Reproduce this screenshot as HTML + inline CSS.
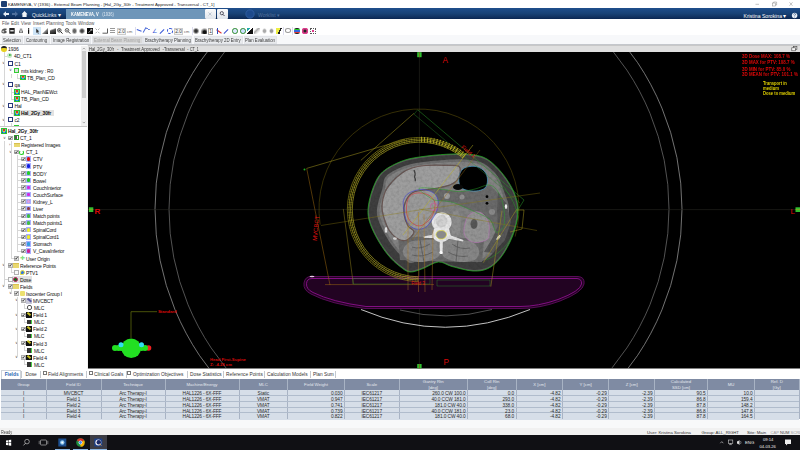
<!DOCTYPE html><html><head><meta charset="utf-8"><style>
*{margin:0;padding:0;box-sizing:border-box}
html,body{width:800px;height:450px;overflow:hidden;background:#fff;font-family:"Liberation Sans", sans-serif;}
.a{position:absolute;white-space:nowrap}
.t{position:absolute;white-space:nowrap;font-size:4.6px;line-height:6px;color:#222}
</style></head><body>

<div class="a" style="left:0;top:0;width:800px;height:8px;background:#fff"></div>
<div class="a" style="left:1px;top:1px;width:6px;height:6px;background:#1d3f73;border-radius:1px"></div>
<div class="t" style="left:8px;top:2px;font-size:4.28px;color:#222">KAMENEVA, V (1936) - External Beam Planning - [Hal_2Gy_30fr - Treatment Approved - Transversal - CT_1]</div>
<svg class="a" style="left:740px;top:0" width="60" height="9" viewBox="740 0 60 9"><path d="M755.5,4.3 L759,4.3" stroke="#888" stroke-width="0.5"/><rect x="772.6" y="3" width="3" height="3" fill="none" stroke="#888" stroke-width="0.5"/><path d="M773.6,3 L773.6,2 L776.6,2 L776.6,5 L775.6,5" fill="none" stroke="#888" stroke-width="0.5"/><path d="M789.5,2.3 L792.5,5.8 M792.5,2.3 L789.5,5.8" stroke="#888" stroke-width="0.5"/></svg>
<div class="a" style="left:0;top:8.3px;width:800px;height:10.9px;background:linear-gradient(#1f4e8c,#184276 50%,#10305e 85%,#0a2550)"></div>
<div class="a" style="left:66px;top:8.5px;width:139px;height:10.5px;background:#6e96b9"></div>
<div class="a" style="left:205px;top:9.3px;width:11px;height:9.5px;background:linear-gradient(#fbfbfb,#dfe5ec);border-radius:1px"></div>
<div class="a" style="left:217px;top:9.3px;width:11px;height:9.5px;background:linear-gradient(#fbfbfb,#dfe5ec);border-radius:1px"></div>
<svg class="a" style="left:0;top:0" width="300" height="20" viewBox="0 0 300 20"><path d="M3,14 L6,11.3 L6,13 L9,13 L9,15 L6,15 L6,16.7Z" fill="#e6edf5"/><path d="M18,14 L15,11.3 L15,13 L12,13 L12,15 L15,15 L15,16.7Z" fill="#4f6f9c"/><path d="M21.5,14.2 L24.5,11 L27.5,14.2 L26.6,14.2 L26.6,17 L22.4,17 L22.4,14.2Z" fill="#f0f4f8"/><path d="M208.5,12.5 L211.5,15.5 M211.5,12.5 L208.5,15.5" stroke="#9ab" stroke-width="0.6"/><circle cx="221.8" cy="13.2" r="1.6" stroke="#334" stroke-width="0.8" fill="none"/><path d="M223,14.4 L224.5,16" stroke="#334" stroke-width="0.9"/><circle cx="250" cy="14" r="4.2" fill="#1d4a8c" stroke="#3a6ab0" stroke-width="0.6"/></svg>
<div class="t" style="left:32px;top:12.4px;font-size:5px;color:#e6edf5">QuickLinks <span style="font-size:6px">&#x25BE;</span></div>
<div class="t" style="left:71px;top:12.3px;font-size:4.6px;color:#fff;font-weight:bold;transform:scaleX(0.88);transform-origin:0 0">KAMENEVA, V&nbsp;&nbsp; <span style="font-weight:normal;color:#dce6f0">(1936)</span></div>
<div class="t" style="left:258px;top:11.5px;font-size:5px;color:#52729f">Worklist &#x25BE;</div>
<div class="t" style="left:743.5px;top:12.6px;font-size:5.1px;color:#fff">Kristina Sorokina <span style="font-size:6px">&#x25BE;</span></div>
<svg class="a" style="left:790px;top:11px" width="10" height="9" viewBox="790 11 10 9"><circle cx="794.6" cy="15.5" r="2.7" fill="#e8eef5"/><path d="M793.6,14.6 Q793.8,13.4 794.8,13.5 Q795.8,13.7 795.5,14.6 Q795.2,15.2 794.7,15.5 L794.7,16.2" fill="none" stroke="#1a3f73" stroke-width="0.55"/><circle cx="794.7" cy="17.1" r="0.35" fill="#1a3f73"/></svg>
<div class="t" style="left:2px;top:21.4px;font-size:4.6px;color:#555">File</div>
<div class="t" style="left:11px;top:21.4px;font-size:4.6px;color:#555">Edit</div>
<div class="t" style="left:21px;top:21.4px;font-size:4.6px;color:#555">View</div>
<div class="t" style="left:33px;top:21.4px;font-size:4.6px;color:#555">Insert</div>
<div class="t" style="left:46px;top:21.4px;font-size:4.6px;color:#555">Planning</div>
<div class="t" style="left:65.5px;top:21.4px;font-size:4.6px;color:#555">Tools</div>
<div class="t" style="left:78px;top:21.4px;font-size:4.6px;color:#555">Window</div>
<div class="a" style="left:0;top:27px;width:800px;height:8px;background:#fff"></div>
<div class="a" style="left:33px;top:27.3px;width:8px;height:7.5px;background:#cde4f7"></div>
<svg class="a" style="left:0;top:26px" width="120" height="10" viewBox="0 26 120 10"><path d="M1.5,31 Q1.5,29 4,28.5 L6.5,28.5 L6.5,30 L4.5,30.5 L6.5,31 L6.5,33 Q3,34 1.5,32.5Z" fill="#555"/><circle cx="3.2" cy="31.5" r="1" fill="#ccc"/><rect x="9.3" y="28" width="5.4" height="5.8" rx="0.6" fill="#222"/><rect x="10.3" y="30" width="3.4" height="1.5" fill="#ddd"/><path d="M19,30.5 L23,30.5 L23,33 L19,33Z" fill="#777"/><rect x="19.8" y="28.5" width="2.4" height="2" fill="#999"/><circle cx="21" cy="31.8" r="0.8" fill="#eee"/><rect x="28" y="29.3" width="1.2" height="4.5" fill="#111"/><rect x="28" y="28" width="1.2" height="0.8" fill="#111"/><path d="M36.2,28.5 L36.2,33 L37.2,32 L38,33.8 L38.8,33.4 L38,31.7 L39.3,31.6Z" fill="#333"/><circle cx="59.3" cy="30.3" r="1.8" fill="none" stroke="#333" stroke-width="0.8"/><path d="M60.6,31.6 L62.5,33.6" stroke="#222" stroke-width="1"/><path d="M58.3,30.3 L60.3,30.3 M59.3,29.3 L59.3,31.3" stroke="#111" stroke-width="0.6"/><circle cx="67" cy="30.3" r="1.8" fill="none" stroke="#444" stroke-width="0.8"/><path d="M68.3,31.6 L70.2,33.6" stroke="#333" stroke-width="1"/><path d="M66,30.3 L68,30.3" stroke="#222" stroke-width="0.6"/><rect x="87" y="28" width="6" height="6" fill="#0a0a0a"/><path d="M88.5,32.8 L91.8,29.3 M90.2,29.3 L91.8,29.3 L91.8,30.9" stroke="#fff" stroke-width="0.6" fill="none"/><path d="M95.5,28.5 L97,30 M99.5,28.5 L98,30 M95.5,33.3 L97,31.8 M99.5,33.3 L98,31.8" stroke="#777" stroke-width="0.6"/><path d="M102.5,33.2 L107.5,33.2 L107.5,28.5" stroke="#333" stroke-width="0.8" fill="none"/></svg>
<div class="a" style="left:42px;top:28.3px;width:6px;height:5.5px;background:linear-gradient(135deg,#fff 45%,#888 55%,#111 100%)"></div>
<div class="a" style="left:50px;top:28.3px;width:5.5px;height:5.5px;background:linear-gradient(160deg,#fff 20%,#555 40%,#111 100%)"></div>
<div class="a" style="left:71.5px;top:28.3px;width:5.5px;height:5.5px;background:radial-gradient(#666 0 35%,#bbb 60%,#fff 85%)"></div>
<div class="a" style="left:79px;top:28.3px;width:5.5px;height:5.5px;background:radial-gradient(#444 0 30%,#999 50%,#fff 80%);border-radius:50%"></div>
<div class="a" style="left:110px;top:28.3px;width:5px;height:5.5px;background:repeating-linear-gradient(#999 0 1px,#fff 1px 2px)"></div>
<div class="a" style="left:117px;top:27.6px;width:9px;height:7px;border:0.6px solid #ccc;background:#f6f6f6"></div>
<div class="t" style="left:117px;top:29.2px;width:9px;text-align:center;font-size:4.8px;color:#444">2.0</div>
<div class="t" style="left:127px;top:29.4px;font-size:4px;color:#666">cm</div>
<div class="a" style="left:134.5px;top:27px;width:0.6px;height:8px;background:#dde"></div>
<div class="a" style="left:137px;top:28px;width:5px;height:3px;border-bottom:1.5px solid #3a5ad8;transform:rotate(20deg)"></div>
<div class="a" style="left:144px;top:28.3px;width:5px;height:5.5px;border-left:1px dashed #4a6ad8;border-top:1px solid #4a6ad8;transform:rotate(30deg)"></div>
<div class="t" style="left:152px;top:27.6px;font-size:5.5px;color:#3a5ad8">&#x2220;</div>
<div class="a" style="left:159px;top:31px;width:6px;height:1px;border-top:1px solid #3a5ad8;transform:rotate(-45deg)"></div>
<div class="a" style="left:167px;top:28.3px;width:5.5px;height:5.5px;border:1px dashed #3a5ad8;border-radius:50%"></div>
<div class="a" style="left:174px;top:27.6px;width:9px;height:7px;border:0.6px solid #ccc;background:#f3f3f3"></div>
<div class="t" style="left:174px;top:29.2px;width:9px;text-align:center;font-size:4.8px;color:#444">2.0</div>
<div class="t" style="left:184px;top:29.4px;font-size:4px;color:#666">cm</div>
<div class="a" style="left:191.5px;top:27px;width:0.6px;height:8px;background:#dde"></div>
<div class="a" style="left:193px;top:28.3px;width:5.5px;height:5.5px;background:radial-gradient(#333 0 30%,#888 50%,#fff 80%)"></div>
<div class="a" style="left:201px;top:28.3px;width:5.5px;height:5.5px;background:radial-gradient(circle at 60% 70%,#111 0 25%,#777 45%,#fff 80%)"></div>
<div class="a" style="left:208px;top:27.6px;width:5px;height:7px;border:0.6px solid #aaa;background:#fff"></div>
<div class="t" style="left:209.3px;top:29px;font-size:4.8px;color:#333">1</div>
<div class="a" style="left:216px;top:31px;width:6px;height:1px;border-top:1px solid #e03030;transform:rotate(35deg)"></div>
<div class="a" style="left:217px;top:28.3px;width:2px;height:5.5px;border-left:1px solid #3050c0"></div>
<div class="a" style="left:223px;top:31px;width:6px;height:1px;border-top:1px solid #4050d0;transform:rotate(-45deg)"></div>
<div class="a" style="left:232px;top:28.3px;width:5.5px;height:5.5px;border:1.2px solid #2a8a2a;border-radius:50%;background:#dde8ff"></div>
<div class="a" style="left:240px;top:28.3px;width:5.5px;height:5.5px;border:1.2px solid #2a8a2a;border-radius:50%;background:#cce0ff"></div>
<div class="a" style="left:247px;top:28.3px;width:5.5px;height:5.5px;background:linear-gradient(135deg,#2aa 0 30%,#fff 30% 45%,#111 45% 100%)"></div>
<div class="a" style="left:254px;top:28.3px;width:5.5px;height:5.5px;background:linear-gradient(135deg,#fff 20%,#aaa 40%,#ddd 60%,#fff 80%)"></div>
<div class="a" style="left:262px;top:28.3px;width:5px;height:5.5px;background:radial-gradient(#aaa 0 30%,#fff 70%)"></div>
<div class="a" style="left:269px;top:28.3px;width:5px;height:5.5px;background:radial-gradient(#999 0 30%,#fff 70%)"></div>
<div class="a" style="left:276px;top:28.3px;width:6px;height:5.5px;background:linear-gradient(110deg,#ee4 0 50%,#222 50% 70%,#fff 70%)"></div>
<div class="a" style="left:283px;top:27px;width:0.6px;height:8px;background:#dde"></div>
<div class="a" style="left:285px;top:28.3px;width:6px;height:4.5px;border:1px solid #999;border-radius:50%"></div>
<div class="a" style="left:292px;top:27px;width:0.6px;height:8px;background:#dde"></div>
<div class="a" style="left:294px;top:28.3px;width:6px;height:5.5px;background:linear-gradient(#222 0 15%,#2c2 15% 40%,#36d 40% 65%,#d33 65% 85%,#222 85%);border-radius:40%"></div>
<div class="a" style="left:302px;top:28.3px;width:6px;height:5.5px;background:radial-gradient(#222 0 30%,#c2387a 40%,#e04090 70%,#fff 90%)"></div>
<div class="a" style="left:309.5px;top:28.3px;width:6px;height:5.5px;background:radial-gradient(#e03a8a 0 35%,#fff 45%);border:1px dotted #555"></div>
<div class="a" style="left:0;top:35px;width:800px;height:10px;background:#f6f7f9"></div>
<div class="a" style="left:0;top:35px;width:800px;height:9.5px;background:#f7f8fa"></div>
<div class="a" style="left:1.9px;top:35.9px;width:21.6px;height:8.4px;background:#e9ebee;border:0.5px solid #e2e4e8"></div>
<div class="t" style="left:3.2px;top:38.3px;font-size:4.7px;color:#3a3a3a;transform:scaleX(0.92);transform-origin:0 0">Selection</div>
<div class="a" style="left:24px;top:35.9px;width:25.7px;height:8.4px;background:#e9ebee;border:0.5px solid #e2e4e8"></div>
<div class="t" style="left:25.9px;top:38.3px;font-size:4.7px;color:#3a3a3a;transform:scaleX(0.92);transform-origin:0 0">Contouring</div>
<div class="a" style="left:50.7px;top:35.9px;width:40.3px;height:8.4px;background:#e9ebee;border:0.5px solid #e2e4e8"></div>
<div class="t" style="left:53px;top:38.3px;font-size:4.7px;color:#3a3a3a;transform:scaleX(0.92);transform-origin:0 0">Image Registration</div>
<div class="a" style="left:92px;top:35.9px;width:51.0px;height:8.4px;background:#d9d9d9;border:0.5px solid #e2e4e8"></div>
<div class="t" style="left:93.8px;top:38.3px;font-size:4.7px;color:#a0a0a0;transform:scaleX(0.92);transform-origin:0 0">External Beam Planning</div>
<div class="a" style="left:142.8px;top:35.9px;width:49.7px;height:8.4px;background:#e9ebee;border:0.5px solid #e2e4e8"></div>
<div class="t" style="left:144.7px;top:38.3px;font-size:4.7px;color:#3a3a3a;transform:scaleX(0.92);transform-origin:0 0">Brachytherapy Planning</div>
<div class="a" style="left:193.5px;top:35.9px;width:49.3px;height:8.4px;background:#e9ebee;border:0.5px solid #e2e4e8"></div>
<div class="t" style="left:195px;top:38.3px;font-size:4.7px;color:#3a3a3a;transform:scaleX(0.92);transform-origin:0 0">Brachytherapy 2D Entry</div>
<div class="a" style="left:243.6px;top:35.9px;width:33.0px;height:8.4px;background:#e9ebee;border:0.5px solid #e2e4e8"></div>
<div class="t" style="left:245px;top:38.3px;font-size:4.7px;color:#3a3a3a;transform:scaleX(0.92);transform-origin:0 0">Plan Evaluation</div>
<div class="a" style="left:0;top:44.3px;width:800px;height:0.8px;background:#c4c7cc"></div>
<div class="a" style="left:0;top:45px;width:88px;height:324px;background:#fff"></div>
<div class="a" style="left:81px;top:45.5px;width:5.7px;height:80px;background:#f0f0f0"></div>
<div class="a" style="left:81.8px;top:51px;width:4.2px;height:47px;background:#cdcdcd"></div>
<svg class="a" style="left:80px;top:45px" width="8" height="82" viewBox="80 45 8 82"><path d="M82.6,49.3 L83.9,48 L85.2,49.3" stroke="#666" stroke-width="0.5" fill="none"/><path d="M82.6,121.8 L83.9,123.1 L85.2,121.8" stroke="#666" stroke-width="0.5" fill="none"/></svg>
<div class="a" style="left:0;top:125.5px;width:87px;height:0.8px;background:#c8c8c8"></div>
<div class="a" style="left:86.7px;top:45px;width:1.5px;height:324px;background:#f4f4f4"></div>
<div class="a" style="left:0;top:45px;width:82px;height:81px;overflow:hidden">
<div class="a" style="left:1px;top:1.1px;width:5.5px;height:5.5px;background:#e8d020;border-radius:50%;border-top:2px solid #222"></div><div class="t" style="left:8px;top:1.30px;font-size:5px;letter-spacing:-0.15px;font-weight:normal;color:#111">1936</div>
<div class="a" style="left:7px;top:8.4px;width:5px;height:5px;background:#c8e8c8;border-radius:50%"></div><div class="a" style="left:8.5px;top:9.2px;width:0;height:0;border-left:3px solid #2a2;border-top:1.7px solid transparent;border-bottom:1.7px solid transparent"></div><div class="t" style="left:14px;top:8.41px;font-size:5px;letter-spacing:-0.15px;font-weight:normal;color:#111">4D_CT1</div>
<div class="t" style="left:1.5px;top:14.8px;font-size:4px;color:#555">&#x2228;</div><div class="a" style="left:8px;top:15.5px;width:5px;height:5px;background:#fff;border:0.8px solid #2a3a7a;border-top:1.5px solid #2a3a7a"></div><div class="t" style="left:14.5px;top:15.52px;font-size:5px;letter-spacing:-0.15px;font-weight:normal;color:#111">C1</div>
<div class="t" style="left:8.5px;top:21.9px;font-size:4px;color:#555">&#x2228;</div><div class="a" style="left:14px;top:22.6px;width:5px;height:5px;background:#ddd;border:1px solid #3c3"></div><div class="t" style="left:21px;top:22.63px;font-size:5px;letter-spacing:-0.15px;font-weight:normal;color:#111">mts kidney : R0</div>
<div class="a" style="left:20px;top:29.5px;width:5.8px;height:5.8px;background:radial-gradient(ellipse at 50% 20%,#e03020 0 25%,#f0d020 40%,#30c0e0 60%,#1a50d0 80%);border:0.6px solid #30c030"></div><div class="t" style="left:27px;top:29.74px;font-size:5px;letter-spacing:-0.15px;font-weight:normal;color:#111">TB_Plan_CD</div>
<div class="t" style="left:1.5px;top:36.2px;font-size:4px;color:#555">&#x2228;</div><div class="a" style="left:8px;top:36.9px;width:5px;height:5px;background:#fff;border:0.8px solid #2a3a7a;border-top:1.5px solid #2a3a7a"></div><div class="t" style="left:14.5px;top:36.85px;font-size:5px;letter-spacing:-0.15px;font-weight:normal;color:#111">qa</div>
<div class="a" style="left:14px;top:43.8px;width:5.8px;height:5.8px;background:radial-gradient(ellipse at 50% 20%,#e03020 0 25%,#f0d020 40%,#30c0e0 60%,#1a50d0 80%);border:0.6px solid #30c030"></div><div class="t" style="left:21px;top:43.96px;font-size:5px;letter-spacing:-0.15px;font-weight:normal;color:#111">HAL_PlanNEWct</div>
<div class="a" style="left:14px;top:50.9px;width:5.8px;height:5.8px;background:radial-gradient(ellipse at 50% 20%,#e03020 0 25%,#f0d020 40%,#30c0e0 60%,#1a50d0 80%);border:0.6px solid #30c030"></div><div class="t" style="left:21px;top:51.07px;font-size:5px;letter-spacing:-0.15px;font-weight:normal;color:#111">TB_Plan_CD</div>
<div class="t" style="left:1.5px;top:57.5px;font-size:4px;color:#555">&#x2228;</div><div class="a" style="left:8px;top:58.2px;width:5px;height:5px;background:#fff;border:0.8px solid #2a3a7a;border-top:1.5px solid #2a3a7a"></div><div class="t" style="left:14.5px;top:58.18px;font-size:5px;letter-spacing:-0.15px;font-weight:normal;color:#111">Hal</div>
<div class="a" style="left:13px;top:64.7px;width:41px;height:6.5px;background:#e2e2e2"></div><div class="a" style="left:14px;top:65.1px;width:5.8px;height:5.8px;background:radial-gradient(ellipse at 50% 20%,#e03020 0 25%,#f0d020 40%,#30c0e0 60%,#1a50d0 80%);border:0.6px solid #30c030"></div><div class="t" style="left:21px;top:65.29px;font-size:5px;letter-spacing:-0.15px;font-weight:bold;color:#111">Hal_2Gy_30fr</div>
<div class="t" style="left:1.5px;top:71.7px;font-size:4px;color:#555">&#x2228;</div><div class="a" style="left:8px;top:72.4px;width:5px;height:5px;background:#fff;border:0.8px solid #2a3a7a;border-top:1.5px solid #2a3a7a"></div><div class="t" style="left:14.5px;top:72.40px;font-size:5px;letter-spacing:-0.15px;font-weight:normal;color:#111">c2</div>
<div class="a" style="left:14px;top:79.5px;width:5px;height:5px;background:#ddd;border:1px solid #3c3"></div><div class="t" style="left:21px;top:79.51px;font-size:5px;letter-spacing:-0.15px;font-weight:normal;color:#111">LMTS kidney : R0</div>
</div>
<div class="a" style="left:1px;top:128.2px;width:5.8px;height:5.8px;background:radial-gradient(ellipse at 50% 20%,#e03020 0 25%,#f0d020 40%,#30c0e0 60%,#1a50d0 80%);border:0.6px solid #30c030"></div><div class="t" style="left:8px;top:128.40px;font-size:5px;letter-spacing:-0.15px;font-weight:bold;color:#111">Hal_2Gy_30fr</div>
<div class="t" style="left:2.5px;top:134.5px;font-size:4px;color:#555">&#x2228;</div><div class="a" style="left:8px;top:135.6px;width:4.5px;height:4.5px;border:0.5px solid #b0b0b0;background:#e6e6e6"></div><svg class="a" style="left:8px;top:135.6px" width="4.5" height="4.5" viewBox="0 0 4.5 4.5"><path d="M0.9,2.2 L1.9,3.3 L3.7,0.9" stroke="#222" stroke-width="0.75" fill="none"/></svg><div class="a" style="left:13.5px;top:135.2px;width:5px;height:5px;background:#fff;border:1px solid #2a9a2a"></div><div class="a" style="left:14.7px;top:136.3px;width:2.5px;height:3px;background:#555"></div><div class="t" style="left:20px;top:135.20px;font-size:5px;letter-spacing:-0.15px;font-weight:normal;color:#111">CT_1</div>
<div class="a" style="left:14px;top:142.7px;width:5.5px;height:4.5px;background:#e8d870;border-top:1px solid #d8c050"></div><div class="t" style="left:21px;top:142.28px;font-size:5px;letter-spacing:-0.15px;font-weight:normal;color:#111">Registered Images</div>
<div class="t" style="left:8.5px;top:148.7px;font-size:4px;color:#555">&#x2228;</div><div class="a" style="left:14px;top:149.8px;width:4.5px;height:4.5px;border:0.5px solid #b0b0b0;background:#e6e6e6"></div><svg class="a" style="left:14px;top:149.8px" width="4.5" height="4.5" viewBox="0 0 4.5 4.5"><path d="M0.9,2.2 L1.9,3.3 L3.7,0.9" stroke="#222" stroke-width="0.75" fill="none"/></svg><div class="a" style="left:19px;top:149.6px;width:5px;height:5px;border:1px solid #2c2;border-radius:50%;border-top-color:#fff"></div><div class="t" style="left:26px;top:149.36px;font-size:5px;letter-spacing:-0.15px;font-weight:normal;color:#111">CT_1</div>
<div class="a" style="left:21px;top:156.8px;width:4.5px;height:4.5px;border:0.5px solid #b0b0b0;background:#e6e6e6"></div><svg class="a" style="left:21px;top:156.8px" width="4.5" height="4.5" viewBox="0 0 4.5 4.5"><path d="M0.9,2.2 L1.9,3.3 L3.7,0.9" stroke="#222" stroke-width="0.75" fill="none"/></svg><div class="a" style="left:26px;top:156.3px;width:5.4px;height:5.4px;background:#8a90f0;border:0.5px solid #a8b0ff"></div><div class="a" style="left:26.9px;top:157.1px;width:3.6px;height:3.8px;background:#e01010;border-radius:45%"></div><div class="t" style="left:33px;top:156.44px;font-size:5px;letter-spacing:-0.15px;font-weight:normal;color:#111">CTV</div>
<div class="a" style="left:21px;top:163.9px;width:4.5px;height:4.5px;border:0.5px solid #b0b0b0;background:#e6e6e6"></div><svg class="a" style="left:21px;top:163.9px" width="4.5" height="4.5" viewBox="0 0 4.5 4.5"><path d="M0.9,2.2 L1.9,3.3 L3.7,0.9" stroke="#222" stroke-width="0.75" fill="none"/></svg><div class="a" style="left:26px;top:163.4px;width:5.4px;height:5.4px;background:#8a90f0;border:0.5px solid #a8b0ff"></div><div class="a" style="left:26.9px;top:164.2px;width:3.6px;height:3.8px;background:#1020e0;border-radius:45%"></div><div class="t" style="left:33px;top:163.52px;font-size:5px;letter-spacing:-0.15px;font-weight:normal;color:#111">PTV</div>
<div class="a" style="left:21px;top:171.0px;width:4.5px;height:4.5px;border:0.5px solid #b0b0b0;background:#e6e6e6"></div><svg class="a" style="left:21px;top:171.0px" width="4.5" height="4.5" viewBox="0 0 4.5 4.5"><path d="M0.9,2.2 L1.9,3.3 L3.7,0.9" stroke="#222" stroke-width="0.75" fill="none"/></svg><div class="a" style="left:26px;top:170.5px;width:5.4px;height:5.4px;background:#8a90f0;border:0.5px solid #a8b0ff"></div><div class="a" style="left:26.9px;top:171.3px;width:3.6px;height:3.8px;background:#20d020;border-radius:45%"></div><div class="t" style="left:33px;top:170.60px;font-size:5px;letter-spacing:-0.15px;font-weight:normal;color:#111">BODY</div>
<div class="a" style="left:21px;top:178.1px;width:4.5px;height:4.5px;border:0.5px solid #b0b0b0;background:#e6e6e6"></div><svg class="a" style="left:21px;top:178.1px" width="4.5" height="4.5" viewBox="0 0 4.5 4.5"><path d="M0.9,2.2 L1.9,3.3 L3.7,0.9" stroke="#222" stroke-width="0.75" fill="none"/></svg><div class="a" style="left:26px;top:177.6px;width:5.4px;height:5.4px;background:#8a90f0;border:0.5px solid #a8b0ff"></div><div class="a" style="left:26.9px;top:178.4px;width:3.6px;height:3.8px;background:#20d020;border-radius:45%"></div><div class="t" style="left:33px;top:177.68px;font-size:5px;letter-spacing:-0.15px;font-weight:normal;color:#111">Bowel</div>
<div class="a" style="left:21px;top:185.2px;width:4.5px;height:4.5px;border:0.5px solid #b0b0b0;background:#e6e6e6"></div><svg class="a" style="left:21px;top:185.2px" width="4.5" height="4.5" viewBox="0 0 4.5 4.5"><path d="M0.9,2.2 L1.9,3.3 L3.7,0.9" stroke="#222" stroke-width="0.75" fill="none"/></svg><div class="a" style="left:26px;top:184.7px;width:5.4px;height:5.4px;background:#8a90f0;border:0.5px solid #a8b0ff"></div><div class="a" style="left:26.9px;top:185.5px;width:3.6px;height:3.8px;background:#e020e0;border-radius:45%"></div><div class="t" style="left:33px;top:184.76px;font-size:5px;letter-spacing:-0.15px;font-weight:normal;color:#111">CouchInterior</div>
<div class="a" style="left:21px;top:192.2px;width:4.5px;height:4.5px;border:0.5px solid #b0b0b0;background:#e6e6e6"></div><svg class="a" style="left:21px;top:192.2px" width="4.5" height="4.5" viewBox="0 0 4.5 4.5"><path d="M0.9,2.2 L1.9,3.3 L3.7,0.9" stroke="#222" stroke-width="0.75" fill="none"/></svg><div class="a" style="left:26px;top:191.7px;width:5.4px;height:5.4px;background:#8a90f0;border:0.5px solid #a8b0ff"></div><div class="a" style="left:26.9px;top:192.5px;width:3.6px;height:3.8px;background:#e020e0;border-radius:45%"></div><div class="t" style="left:33px;top:191.84px;font-size:5px;letter-spacing:-0.15px;font-weight:normal;color:#111">CouchSurface</div>
<div class="a" style="left:21px;top:199.3px;width:4.5px;height:4.5px;border:0.5px solid #b0b0b0;background:#e6e6e6"></div><svg class="a" style="left:21px;top:199.3px" width="4.5" height="4.5" viewBox="0 0 4.5 4.5"><path d="M0.9,2.2 L1.9,3.3 L3.7,0.9" stroke="#222" stroke-width="0.75" fill="none"/></svg><div class="a" style="left:26px;top:198.8px;width:5.4px;height:5.4px;background:#8a90f0;border:0.5px solid #a8b0ff"></div><div class="a" style="left:26.9px;top:199.6px;width:3.6px;height:3.8px;background:#e0a0e0;border-radius:45%"></div><div class="t" style="left:33px;top:198.92px;font-size:5px;letter-spacing:-0.15px;font-weight:normal;color:#111">Kidney_L</div>
<div class="a" style="left:21px;top:206.4px;width:4.5px;height:4.5px;border:0.5px solid #b0b0b0;background:#e6e6e6"></div><svg class="a" style="left:21px;top:206.4px" width="4.5" height="4.5" viewBox="0 0 4.5 4.5"><path d="M0.9,2.2 L1.9,3.3 L3.7,0.9" stroke="#222" stroke-width="0.75" fill="none"/></svg><div class="a" style="left:26px;top:205.9px;width:5.4px;height:5.4px;background:#8a90f0;border:0.5px solid #a8b0ff"></div><div class="a" style="left:26.9px;top:206.7px;width:3.6px;height:3.8px;background:#904040;border-radius:45%"></div><div class="t" style="left:33px;top:206.00px;font-size:5px;letter-spacing:-0.15px;font-weight:normal;color:#111">Liver</div>
<div class="a" style="left:21px;top:213.5px;width:4.5px;height:4.5px;border:0.5px solid #b0b0b0;background:#e6e6e6"></div><svg class="a" style="left:21px;top:213.5px" width="4.5" height="4.5" viewBox="0 0 4.5 4.5"><path d="M0.9,2.2 L1.9,3.3 L3.7,0.9" stroke="#222" stroke-width="0.75" fill="none"/></svg><div class="a" style="left:26px;top:213.0px;width:5.4px;height:5.4px;background:#8a90f0;border:0.5px solid #a8b0ff"></div><div class="a" style="left:26.9px;top:213.8px;width:3.6px;height:3.8px;background:#40c040;border-radius:45%"></div><div class="t" style="left:33px;top:213.08px;font-size:5px;letter-spacing:-0.15px;font-weight:normal;color:#111">Match points</div>
<div class="a" style="left:21px;top:220.6px;width:4.5px;height:4.5px;border:0.5px solid #b0b0b0;background:#e6e6e6"></div><svg class="a" style="left:21px;top:220.6px" width="4.5" height="4.5" viewBox="0 0 4.5 4.5"><path d="M0.9,2.2 L1.9,3.3 L3.7,0.9" stroke="#222" stroke-width="0.75" fill="none"/></svg><div class="a" style="left:26px;top:220.1px;width:5.4px;height:5.4px;background:#8a90f0;border:0.5px solid #a8b0ff"></div><div class="a" style="left:26.9px;top:220.9px;width:3.6px;height:3.8px;background:#40c040;border-radius:45%"></div><div class="t" style="left:33px;top:220.16px;font-size:5px;letter-spacing:-0.15px;font-weight:normal;color:#111">Match points1</div>
<div class="a" style="left:21px;top:227.6px;width:4.5px;height:4.5px;border:0.5px solid #b0b0b0;background:#e6e6e6"></div><svg class="a" style="left:21px;top:227.6px" width="4.5" height="4.5" viewBox="0 0 4.5 4.5"><path d="M0.9,2.2 L1.9,3.3 L3.7,0.9" stroke="#222" stroke-width="0.75" fill="none"/></svg><div class="a" style="left:26px;top:227.1px;width:5.4px;height:5.4px;background:#8a90f0;border:0.5px solid #a8b0ff"></div><div class="a" style="left:26.9px;top:227.9px;width:3.6px;height:3.8px;background:#f0f020;border-radius:45%"></div><div class="t" style="left:33px;top:227.24px;font-size:5px;letter-spacing:-0.15px;font-weight:normal;color:#111">SpinalCord</div>
<div class="a" style="left:21px;top:234.7px;width:4.5px;height:4.5px;border:0.5px solid #b0b0b0;background:#e6e6e6"></div><svg class="a" style="left:21px;top:234.7px" width="4.5" height="4.5" viewBox="0 0 4.5 4.5"><path d="M0.9,2.2 L1.9,3.3 L3.7,0.9" stroke="#222" stroke-width="0.75" fill="none"/></svg><div class="a" style="left:26px;top:234.2px;width:5.4px;height:5.4px;background:#8a90f0;border:0.5px solid #a8b0ff"></div><div class="a" style="left:26.9px;top:235.0px;width:3.6px;height:3.8px;background:#f0f020;border-radius:45%"></div><div class="t" style="left:33px;top:234.32px;font-size:5px;letter-spacing:-0.15px;font-weight:normal;color:#111">SpinalCord1</div>
<div class="a" style="left:21px;top:241.8px;width:4.5px;height:4.5px;border:0.5px solid #b0b0b0;background:#e6e6e6"></div><svg class="a" style="left:21px;top:241.8px" width="4.5" height="4.5" viewBox="0 0 4.5 4.5"><path d="M0.9,2.2 L1.9,3.3 L3.7,0.9" stroke="#222" stroke-width="0.75" fill="none"/></svg><div class="a" style="left:26px;top:241.3px;width:5.4px;height:5.4px;background:#8a90f0;border:0.5px solid #a8b0ff"></div><div class="a" style="left:26.9px;top:242.1px;width:3.6px;height:3.8px;background:#30a0e0;border-radius:45%"></div><div class="t" style="left:33px;top:241.40px;font-size:5px;letter-spacing:-0.15px;font-weight:normal;color:#111">Stomach</div>
<div class="a" style="left:21px;top:248.9px;width:4.5px;height:4.5px;border:0.5px solid #b0b0b0;background:#e6e6e6"></div><svg class="a" style="left:21px;top:248.9px" width="4.5" height="4.5" viewBox="0 0 4.5 4.5"><path d="M0.9,2.2 L1.9,3.3 L3.7,0.9" stroke="#222" stroke-width="0.75" fill="none"/></svg><div class="a" style="left:26px;top:248.4px;width:5.4px;height:5.4px;background:#8a90f0;border:0.5px solid #a8b0ff"></div><div class="a" style="left:26.9px;top:249.2px;width:3.6px;height:3.8px;background:#d02090;border-radius:45%"></div><div class="t" style="left:33px;top:248.48px;font-size:5px;letter-spacing:-0.15px;font-weight:normal;color:#111">V_CavaInferior</div>
<div class="a" style="left:14px;top:256.0px;width:4.5px;height:4.5px;border:0.5px solid #b0b0b0;background:#e6e6e6"></div><svg class="a" style="left:14px;top:256.0px" width="4.5" height="4.5" viewBox="0 0 4.5 4.5"><path d="M0.9,2.2 L1.9,3.3 L3.7,0.9" stroke="#222" stroke-width="0.75" fill="none"/></svg><div class="t" style="left:19.5px;top:254.8px;font-size:6px;color:#2c2">&#x271B;</div><div class="t" style="left:26px;top:255.56px;font-size:5px;letter-spacing:-0.15px;font-weight:normal;color:#111">User Origin</div>
<div class="t" style="left:2.0px;top:261.9px;font-size:4px;color:#555">&#x2228;</div><div class="a" style="left:8px;top:263.0px;width:4.5px;height:4.5px;border:0.5px solid #b0b0b0;background:#e6e6e6"></div><svg class="a" style="left:8px;top:263.0px" width="4.5" height="4.5" viewBox="0 0 4.5 4.5"><path d="M0.9,2.2 L1.9,3.3 L3.7,0.9" stroke="#222" stroke-width="0.75" fill="none"/></svg><div class="a" style="left:13px;top:263.0px;width:5.5px;height:4.5px;background:#e8d870;border-top:1px solid #d8c050"></div><div class="t" style="left:20px;top:262.64px;font-size:5px;letter-spacing:-0.15px;font-weight:normal;color:#111">Reference Points</div>
<div class="a" style="left:14px;top:270.1px;width:4.5px;height:4.5px;border:0.5px solid #b0b0b0;background:#fafafa"></div><div class="a" style="left:19.5px;top:269.5px;width:5px;height:5px;background:#3a7ad8;border:1px solid #e8e040;border-radius:50% 50% 50% 0"></div><div class="t" style="left:26px;top:269.72px;font-size:5px;letter-spacing:-0.15px;font-weight:normal;color:#111">PTV1</div>
<div class="a" style="left:12px;top:276.2px;width:20px;height:6.5px;background:#e2e2e2"></div><div class="a" style="left:8px;top:277.2px;width:4.5px;height:4.5px;border:0.5px solid #b0b0b0;background:#fafafa"></div><div class="a" style="left:13px;top:276.8px;width:5px;height:5px;background:#1a6a1a;border:1px solid #c02060;border-radius:50%"></div><div class="t" style="left:20px;top:276.80px;font-size:5px;letter-spacing:-0.15px;font-weight:normal;color:#111">Dose</div>
<div class="t" style="left:2.0px;top:283.2px;font-size:4px;color:#555">&#x2228;</div><div class="a" style="left:8px;top:284.3px;width:4.5px;height:4.5px;border:0.5px solid #b0b0b0;background:#e6e6e6"></div><svg class="a" style="left:8px;top:284.3px" width="4.5" height="4.5" viewBox="0 0 4.5 4.5"><path d="M0.9,2.2 L1.9,3.3 L3.7,0.9" stroke="#222" stroke-width="0.75" fill="none"/></svg><div class="a" style="left:13px;top:284.3px;width:5.5px;height:4.5px;background:#e8d870;border-top:1px solid #d8c050"></div><div class="t" style="left:20px;top:283.88px;font-size:5px;letter-spacing:-0.15px;font-weight:normal;color:#111">Fields</div>
<div class="t" style="left:8.5px;top:290.3px;font-size:4px;color:#555">&#x2228;</div><div class="a" style="left:14px;top:291.4px;width:4.5px;height:4.5px;border:0.5px solid #b0b0b0;background:#e6e6e6"></div><svg class="a" style="left:14px;top:291.4px" width="4.5" height="4.5" viewBox="0 0 4.5 4.5"><path d="M0.9,2.2 L1.9,3.3 L3.7,0.9" stroke="#222" stroke-width="0.75" fill="none"/></svg><div class="a" style="left:20px;top:291.2px;width:5px;height:5px;background:#ece070;border-radius:1px"></div><div class="t" style="left:26px;top:290.96px;font-size:5px;letter-spacing:-0.15px;font-weight:normal;color:#111">Isocenter Group I</div>
<div class="t" style="left:14.5px;top:297.3px;font-size:4px;color:#555">&#x2228;</div><div class="a" style="left:21px;top:298.4px;width:4.5px;height:4.5px;border:0.5px solid #b0b0b0;background:#e6e6e6"></div><svg class="a" style="left:21px;top:298.4px" width="4.5" height="4.5" viewBox="0 0 4.5 4.5"><path d="M0.9,2.2 L1.9,3.3 L3.7,0.9" stroke="#222" stroke-width="0.75" fill="none"/></svg><div class="a" style="left:26px;top:298.0px;width:5.5px;height:5.5px;background:#c8c8d8"></div><div class="a" style="left:26.5px;top:299.4px;width:4.5px;height:2px;background:#5a5aa0;transform:rotate(40deg)"></div><div class="t" style="left:33px;top:298.04px;font-size:5px;letter-spacing:-0.15px;font-weight:normal;color:#111">MVCBCT</div>
<div class="a" style="left:27px;top:305.3px;width:5px;height:5px;background:#fff;border:1px solid #555;border-radius:40%"></div><div class="t" style="left:34px;top:305.12px;font-size:5px;letter-spacing:-0.15px;font-weight:normal;color:#111">MLC</div>
<div class="t" style="left:14.5px;top:311.5px;font-size:4px;color:#555">&#x2228;</div><div class="a" style="left:21px;top:312.6px;width:4.5px;height:4.5px;border:0.5px solid #b0b0b0;background:#e6e6e6"></div><svg class="a" style="left:21px;top:312.6px" width="4.5" height="4.5" viewBox="0 0 4.5 4.5"><path d="M0.9,2.2 L1.9,3.3 L3.7,0.9" stroke="#222" stroke-width="0.75" fill="none"/></svg><div class="a" style="left:26px;top:312.2px;width:5.5px;height:5.5px;background:#111"></div><div class="a" style="left:27px;top:313.0px;width:4px;height:2px;background:#c8c020;transform:rotate(40deg)"></div><div class="t" style="left:33px;top:312.20px;font-size:5px;letter-spacing:-0.15px;font-weight:normal;color:#111">Field 1</div>
<div class="a" style="left:27px;top:319.7px;width:5px;height:4.5px;background:#333;border-right:1px solid #4c4"></div><div class="t" style="left:34px;top:319.28px;font-size:5px;letter-spacing:-0.15px;font-weight:normal;color:#111">MLC</div>
<div class="t" style="left:14.5px;top:325.7px;font-size:4px;color:#555">&#x2228;</div><div class="a" style="left:21px;top:326.8px;width:4.5px;height:4.5px;border:0.5px solid #b0b0b0;background:#e6e6e6"></div><svg class="a" style="left:21px;top:326.8px" width="4.5" height="4.5" viewBox="0 0 4.5 4.5"><path d="M0.9,2.2 L1.9,3.3 L3.7,0.9" stroke="#222" stroke-width="0.75" fill="none"/></svg><div class="a" style="left:26px;top:326.4px;width:5.5px;height:5.5px;background:#111"></div><div class="a" style="left:27px;top:327.2px;width:4px;height:2px;background:#c8c020;transform:rotate(40deg)"></div><div class="t" style="left:33px;top:326.36px;font-size:5px;letter-spacing:-0.15px;font-weight:normal;color:#111">Field 2</div>
<div class="a" style="left:27px;top:333.8px;width:5px;height:4.5px;background:#333;border-right:1px solid #4c4"></div><div class="t" style="left:34px;top:333.44px;font-size:5px;letter-spacing:-0.15px;font-weight:normal;color:#111">MLC</div>
<div class="t" style="left:14.5px;top:339.8px;font-size:4px;color:#555">&#x2228;</div><div class="a" style="left:21px;top:340.9px;width:4.5px;height:4.5px;border:0.5px solid #b0b0b0;background:#e6e6e6"></div><svg class="a" style="left:21px;top:340.9px" width="4.5" height="4.5" viewBox="0 0 4.5 4.5"><path d="M0.9,2.2 L1.9,3.3 L3.7,0.9" stroke="#222" stroke-width="0.75" fill="none"/></svg><div class="a" style="left:26px;top:340.5px;width:5.5px;height:5.5px;background:#111"></div><div class="a" style="left:27px;top:341.3px;width:4px;height:2px;background:#c8c020;transform:rotate(40deg)"></div><div class="t" style="left:33px;top:340.52px;font-size:5px;letter-spacing:-0.15px;font-weight:normal;color:#111">Field 3</div>
<div class="a" style="left:27px;top:348.0px;width:5px;height:4.5px;background:#333;border-right:1px solid #4c4"></div><div class="t" style="left:34px;top:347.60px;font-size:5px;letter-spacing:-0.15px;font-weight:normal;color:#111">MLC</div>
<div class="t" style="left:14.5px;top:354.0px;font-size:4px;color:#555">&#x2228;</div><div class="a" style="left:21px;top:355.1px;width:4.5px;height:4.5px;border:0.5px solid #b0b0b0;background:#e6e6e6"></div><svg class="a" style="left:21px;top:355.1px" width="4.5" height="4.5" viewBox="0 0 4.5 4.5"><path d="M0.9,2.2 L1.9,3.3 L3.7,0.9" stroke="#222" stroke-width="0.75" fill="none"/></svg><div class="a" style="left:26px;top:354.7px;width:5.5px;height:5.5px;background:#111"></div><div class="a" style="left:27px;top:355.5px;width:4px;height:2px;background:#c8c020;transform:rotate(40deg)"></div><div class="t" style="left:33px;top:354.68px;font-size:5px;letter-spacing:-0.15px;font-weight:normal;color:#111">Field 4</div>
<div class="a" style="left:27px;top:362.2px;width:5px;height:4.5px;background:#333;border-right:1px solid #4c4"></div><div class="t" style="left:34px;top:361.76px;font-size:5px;letter-spacing:-0.15px;font-weight:normal;color:#111">MLC</div>
<div class="a" style="left:3.6px;top:140.8px;width:0;height:145.7px;border-left:0.5px solid #d6d6d6"></div>
<div class="a" style="left:10.6px;top:140.8px;width:0;height:117.4px;border-left:0.5px solid #d6d6d6"></div>
<div class="a" style="left:17.2px;top:154.96px;width:0;height:96.1px;border-left:0.5px solid #d6d6d6"></div>
<div class="a" style="left:17.2px;top:159.0px;width:3.8px;height:0;border-top:0.5px solid #d6d6d6"></div>
<div class="a" style="left:17.2px;top:166.1px;width:3.8px;height:0;border-top:0.5px solid #d6d6d6"></div>
<div class="a" style="left:17.2px;top:173.2px;width:3.8px;height:0;border-top:0.5px solid #d6d6d6"></div>
<div class="a" style="left:17.2px;top:180.3px;width:3.8px;height:0;border-top:0.5px solid #d6d6d6"></div>
<div class="a" style="left:17.2px;top:187.4px;width:3.8px;height:0;border-top:0.5px solid #d6d6d6"></div>
<div class="a" style="left:17.2px;top:194.4px;width:3.8px;height:0;border-top:0.5px solid #d6d6d6"></div>
<div class="a" style="left:17.2px;top:201.5px;width:3.8px;height:0;border-top:0.5px solid #d6d6d6"></div>
<div class="a" style="left:17.2px;top:208.6px;width:3.8px;height:0;border-top:0.5px solid #d6d6d6"></div>
<div class="a" style="left:17.2px;top:215.7px;width:3.8px;height:0;border-top:0.5px solid #d6d6d6"></div>
<div class="a" style="left:17.2px;top:222.8px;width:3.8px;height:0;border-top:0.5px solid #d6d6d6"></div>
<div class="a" style="left:17.2px;top:229.8px;width:3.8px;height:0;border-top:0.5px solid #d6d6d6"></div>
<div class="a" style="left:17.2px;top:236.9px;width:3.8px;height:0;border-top:0.5px solid #d6d6d6"></div>
<div class="a" style="left:17.2px;top:244.0px;width:3.8px;height:0;border-top:0.5px solid #d6d6d6"></div>
<div class="a" style="left:17.2px;top:251.1px;width:3.8px;height:0;border-top:0.5px solid #d6d6d6"></div>
<div class="a" style="left:10.6px;top:258.2px;width:3.4px;height:0;border-top:0.5px solid #d6d6d6"></div>
<div class="a" style="left:10.6px;top:268.24px;width:0;height:4.1px;border-left:0.5px solid #d6d6d6"></div>
<div class="a" style="left:10.6px;top:272.3px;width:3.4px;height:0;border-top:0.5px solid #d6d6d6"></div>
<div class="a" style="left:3.6px;top:279.4px;width:4.4px;height:0;border-top:0.5px solid #d6d6d6"></div>
<div class="a" style="left:10.6px;top:289.48px;width:0;height:4.1px;border-left:0.5px solid #d6d6d6"></div>
<div class="a" style="left:17.2px;top:296.56px;width:0;height:60.7px;border-left:0.5px solid #d6d6d6"></div>
<div class="a" style="left:23.5px;top:303.64px;width:0;height:4.1px;border-left:0.5px solid #d6d6d6"></div>
<div class="a" style="left:23.5px;top:307.7px;width:3.5px;height:0;border-top:0.5px solid #d6d6d6"></div>
<div class="a" style="left:23.5px;top:317.8px;width:0;height:4.1px;border-left:0.5px solid #d6d6d6"></div>
<div class="a" style="left:23.5px;top:321.9px;width:3.5px;height:0;border-top:0.5px solid #d6d6d6"></div>
<div class="a" style="left:23.5px;top:331.96000000000004px;width:0;height:4.1px;border-left:0.5px solid #d6d6d6"></div>
<div class="a" style="left:23.5px;top:336.0px;width:3.5px;height:0;border-top:0.5px solid #d6d6d6"></div>
<div class="a" style="left:23.5px;top:346.12px;width:0;height:4.1px;border-left:0.5px solid #d6d6d6"></div>
<div class="a" style="left:23.5px;top:350.2px;width:3.5px;height:0;border-top:0.5px solid #d6d6d6"></div>
<div class="a" style="left:23.5px;top:360.28px;width:0;height:4.1px;border-left:0.5px solid #d6d6d6"></div>
<div class="a" style="left:23.5px;top:364.4px;width:3.5px;height:0;border-top:0.5px solid #d6d6d6"></div>
<div class="a" style="left:0;top:45px;width:82px;height:81px;overflow:hidden">
<div class="a" style="left:3.6px;top:7.3px;width:0;height:75.2px;border-left:0.5px solid #d6d6d6"></div>
<div class="a" style="left:3.6px;top:11.4px;width:3.4px;height:0;border-top:0.5px solid #d6d6d6"></div>
<div class="a" style="left:10.6px;top:28.6px;width:0;height:4.1px;border-left:0.5px solid #d6d6d6"></div>
<div class="a" style="left:16.5px;top:28.6px;width:0;height:4.1px;border-left:0.5px solid #d6d6d6"></div>
<div class="a" style="left:16.5px;top:32.7px;width:3.5px;height:0;border-top:0.5px solid #d6d6d6"></div>
<div class="a" style="left:10.6px;top:42.8px;width:0;height:11.2px;border-left:0.5px solid #d6d6d6"></div>
<div class="a" style="left:10.6px;top:47.0px;width:3.4px;height:0;border-top:0.5px solid #d6d6d6"></div>
<div class="a" style="left:10.6px;top:54.1px;width:3.4px;height:0;border-top:0.5px solid #d6d6d6"></div>
<div class="a" style="left:10.6px;top:64.2px;width:0;height:4.1px;border-left:0.5px solid #d6d6d6"></div>
<div class="a" style="left:10.6px;top:68.3px;width:3.4px;height:0;border-top:0.5px solid #d6d6d6"></div>
<div class="a" style="left:10.6px;top:78.4px;width:0;height:4.1px;border-left:0.5px solid #d6d6d6"></div>
<div class="a" style="left:10.6px;top:82.5px;width:3.4px;height:0;border-top:0.5px solid #d6d6d6"></div>
</div>
<div class="t" style="left:9px;top:141.6px;font-size:4px;color:#555">&#x203A;</div>
<div class="a" style="left:88px;top:44.6px;width:712px;height:7.5px;background:#dfdfdf;border-top:0.5px solid #c8c8c8"></div>
<div class="t" style="left:89px;top:47px;font-size:4.5px;color:#333;transform:scaleX(0.9);transform-origin:0 0">Hal_2Gy_30fr</div>
<div class="t" style="left:117px;top:47px;font-size:4.5px;color:#333;transform:scaleX(1);transform-origin:0 0">-</div>
<div class="t" style="left:121.3px;top:47px;font-size:4.5px;color:#333;transform:scaleX(0.95);transform-origin:0 0">Treatment Approved</div>
<div class="t" style="left:162.4px;top:47px;font-size:4.5px;color:#333;transform:scaleX(1);transform-origin:0 0">-</div>
<div class="t" style="left:164.4px;top:47px;font-size:4.5px;color:#333;transform:scaleX(0.885);transform-origin:0 0">Transversal</div>
<div class="t" style="left:187.1px;top:47px;font-size:4.5px;color:#333;transform:scaleX(1);transform-origin:0 0">-</div>
<div class="t" style="left:189.5px;top:47px;font-size:4.5px;color:#333;transform:scaleX(0.8);transform-origin:0 0">CT_1</div>
<svg class="a" style="left:790px;top:45px" width="10" height="7" viewBox="790 45 10 7"><rect x="793.3" y="46.3" width="3.6" height="3" fill="none" stroke="#444" stroke-width="0.6"/><rect x="791.8" y="47.8" width="3.6" height="3" fill="#f4f4f4" stroke="#444" stroke-width="0.6"/></svg>
<svg class="a" style="left:0;top:0" width="800" height="450" viewBox="0 0 800 450">
<defs><clipPath id="vp"><rect x="88" y="52" width="712" height="316.5"/></clipPath>
<clipPath id="bd"><path d="M368.5,205.0 C367.7,210.8 367.6,214.5 369.0,220.0 C370.4,225.5 373.5,232.2 376.7,238.0 C379.9,243.8 384.1,250.2 388.0,255.0 C391.9,259.8 396.3,263.7 400.0,266.5 C403.7,269.3 406.2,271.7 410.0,272.0 C413.8,272.3 418.2,270.2 423.0,268.5 C427.8,266.8 433.7,262.3 438.5,262.0 C443.3,261.7 446.2,265.0 452.0,266.5 C457.8,268.0 467.0,270.7 473.0,271.0 C479.0,271.3 483.5,270.6 488.0,268.5 C492.5,266.4 496.3,262.9 500.0,258.5 C503.7,254.1 507.3,247.6 510.0,242.0 C512.7,236.4 514.7,230.8 516.0,225.0 C517.3,219.2 518.5,212.8 518.0,207.0 C517.5,201.2 515.7,195.7 513.0,190.0 C510.3,184.3 506.3,178.2 502.0,173.0 C497.7,167.8 492.2,162.1 487.0,159.0 C481.8,155.9 476.7,155.3 471.0,154.5 C465.3,153.7 460.3,153.8 453.0,154.0 C445.7,154.2 435.2,154.9 427.0,156.0 C418.8,157.1 410.8,157.9 403.5,160.5 C396.2,163.1 387.9,167.3 383.0,171.5 C378.1,175.7 376.4,179.9 374.0,185.5 C371.6,191.1 369.3,199.2 368.5,205.0Z"/></clipPath>
<filter id="bl" x="-10%" y="-10%" width="120%" height="120%"><feGaussianBlur stdDeviation="0.7"/></filter>
<filter id="nz" x="0" y="0" width="100%" height="100%"><feTurbulence type="fractalNoise" baseFrequency="0.35" numOctaves="2" seed="3"/><feColorMatrix values="0 0 0 0 0  0 0 0 0 0  0 0 0 0 0  0 0 0 1.2 -0.45"/></filter>
</defs>
<rect x="88" y="52" width="712" height="316.5" fill="#000"/>
<g clip-path="url(#vp)" fill="none">
<circle cx="418.5" cy="209" r="263.5" stroke="#b0b0b0" stroke-width="0.65"/>
<circle cx="419" cy="209" r="250" stroke="#8a8a8a" stroke-width="0.6"/>
<line x1="88" y1="209.6" x2="800" y2="209.6" stroke="#262620" stroke-width="0.6"/>
<line x1="419.4" y1="52" x2="419.4" y2="368" stroke="#262620" stroke-width="0.6"/>
<!-- couch -->
<path d="M311,276.5 L578,276.5 Q585,277 584,284 Q583,292 560,301 Q540,308.5 520,308.5 L365,308.5 Q330,304 311,294 Q303,290 304,283 Q305,276.5 311,276.5Z" fill="#220322" stroke="#600c60" stroke-width="0.9"/>
<path d="M312,278.5 L577,278.5 Q582,279 581.5,284 Q580.5,291 558,299.5 Q538,306.5 520,306.5 L366,306.5 Q332,302 313,292.5 Q306,289 306.5,283.5 Q307,278.5 312,278.5Z" stroke="#9a129a" stroke-width="0.8"/>
<ellipse cx="312" cy="276.5" rx="2.5" ry="0.7" fill="#e8c8e8"/>
<path d="M361,309.5 Q445,345 530,309.5" stroke="#d8d8d8" stroke-width="0.9"/>
<path d="M400,310 Q446,322 492,309.5" stroke="#707070" stroke-width="0.7"/>
<!-- body -->
<g clip-path="url(#bd)">
<path d="M368.5,205.0 C367.7,210.8 367.6,214.5 369.0,220.0 C370.4,225.5 373.5,232.2 376.7,238.0 C379.9,243.8 384.1,250.2 388.0,255.0 C391.9,259.8 396.3,263.7 400.0,266.5 C403.7,269.3 406.2,271.7 410.0,272.0 C413.8,272.3 418.2,270.2 423.0,268.5 C427.8,266.8 433.7,262.3 438.5,262.0 C443.3,261.7 446.2,265.0 452.0,266.5 C457.8,268.0 467.0,270.7 473.0,271.0 C479.0,271.3 483.5,270.6 488.0,268.5 C492.5,266.4 496.3,262.9 500.0,258.5 C503.7,254.1 507.3,247.6 510.0,242.0 C512.7,236.4 514.7,230.8 516.0,225.0 C517.3,219.2 518.5,212.8 518.0,207.0 C517.5,201.2 515.7,195.7 513.0,190.0 C510.3,184.3 506.3,178.2 502.0,173.0 C497.7,167.8 492.2,162.1 487.0,159.0 C481.8,155.9 476.7,155.3 471.0,154.5 C465.3,153.7 460.3,153.8 453.0,154.0 C445.7,154.2 435.2,154.9 427.0,156.0 C418.8,157.1 410.8,157.9 403.5,160.5 C396.2,163.1 387.9,167.3 383.0,171.5 C378.1,175.7 376.4,179.9 374.0,185.5 C371.6,191.1 369.3,199.2 368.5,205.0Z" fill="#3e3e3e"/>
<path d="M368.5,205.0 C367.7,210.8 367.6,214.5 369.0,220.0 C370.4,225.5 373.5,232.2 376.7,238.0 C379.9,243.8 384.1,250.2 388.0,255.0 C391.9,259.8 396.3,263.7 400.0,266.5 C403.7,269.3 406.2,271.7 410.0,272.0 C413.8,272.3 418.2,270.2 423.0,268.5 C427.8,266.8 433.7,262.3 438.5,262.0 C443.3,261.7 446.2,265.0 452.0,266.5 C457.8,268.0 467.0,270.7 473.0,271.0 C479.0,271.3 483.5,270.6 488.0,268.5 C492.5,266.4 496.3,262.9 500.0,258.5 C503.7,254.1 507.3,247.6 510.0,242.0 C512.7,236.4 514.7,230.8 516.0,225.0 C517.3,219.2 518.5,212.8 518.0,207.0 C517.5,201.2 515.7,195.7 513.0,190.0 C510.3,184.3 506.3,178.2 502.0,173.0 C497.7,167.8 492.2,162.1 487.0,159.0 C481.8,155.9 476.7,155.3 471.0,154.5 C465.3,153.7 460.3,153.8 453.0,154.0 C445.7,154.2 435.2,154.9 427.0,156.0 C418.8,157.1 410.8,157.9 403.5,160.5 C396.2,163.1 387.9,167.3 383.0,171.5 C378.1,175.7 376.4,179.9 374.0,185.5 C371.6,191.1 369.3,199.2 368.5,205.0Z" stroke="#5e5e5e" stroke-width="2.2"/>
<g filter="url(#bl)">
<path d="M377.4,206.3 C376.7,211.1 376.5,213.3 377.7,217.8 C378.9,222.4 381.7,228.5 384.6,233.7 C387.5,239.0 391.5,245.0 395.0,249.3 C398.5,253.6 402.9,257.1 405.5,259.4 C408.1,261.7 408.4,262.9 410.8,263.0 C413.2,263.1 415.5,261.7 420.0,260.0 C424.5,258.3 432.2,253.4 437.9,253.0 C443.6,252.7 448.3,256.3 454.3,257.8 C460.2,259.3 468.5,261.6 473.5,262.0 C478.5,262.4 481.0,261.9 484.2,260.3 C487.5,258.8 490.1,256.5 493.1,252.8 C496.0,249.0 499.5,243.1 501.9,238.1 C504.2,233.2 506.0,228.1 507.2,223.0 C508.4,217.9 509.4,212.6 509.0,207.8 C508.6,202.9 506.7,199.0 504.9,193.8 C503.0,188.6 501.2,181.6 497.8,176.5 C494.3,171.5 488.8,166.5 484.2,163.7 C479.6,161.0 475.4,160.6 470.2,159.9 C465.0,159.2 460.3,159.2 453.2,159.5 C446.1,159.7 435.7,160.4 427.7,161.5 C419.7,162.5 412.2,163.3 405.3,165.7 C398.5,168.1 390.4,171.8 386.6,175.7 C382.7,179.6 383.8,184.0 382.3,189.1 C380.7,194.2 378.2,201.5 377.4,206.3Z" fill="#6e6e6e"/>
<path d="M380.0,206.7 C379.2,211.3 379.1,212.9 380.2,217.2 C381.4,221.5 384.1,227.4 386.9,232.5 C389.7,237.5 393.6,243.5 397.0,247.7 C400.4,251.8 404.9,255.3 407.2,257.4 C409.5,259.5 408.9,260.4 410.9,260.4 C412.9,260.5 414.6,259.2 419.1,257.6 C423.6,255.9 431.7,250.8 437.7,250.4 C443.7,250.0 448.9,253.8 454.9,255.3 C460.9,256.8 469.0,259.0 473.7,259.4 C478.4,259.9 480.2,259.4 483.1,258.0 C486.0,256.6 488.3,254.6 491.0,251.1 C493.8,247.6 497.3,241.8 499.5,237.0 C501.8,232.2 503.5,227.2 504.7,222.4 C505.8,217.6 506.8,212.6 506.4,208.0 C506.1,203.4 504.2,199.7 502.4,194.7 C500.6,189.7 498.9,182.8 495.6,178.0 C492.4,173.2 487.1,168.5 482.8,166.0 C478.5,163.4 474.8,163.2 469.8,162.5 C464.9,161.9 460.2,161.8 453.3,162.1 C446.3,162.3 435.9,163.0 428.0,164.0 C420.2,165.0 412.8,165.9 406.2,168.1 C399.6,170.4 392.0,173.9 388.4,177.5 C384.8,181.1 386.2,185.0 384.8,189.8 C383.3,194.7 380.7,202.1 380.0,206.7Z" fill="#828282"/>
<path d="M419,188.5 L440,189 L459,191.6 L475,189 L490,185 L499.7,194.7 L504,210 L504,225.8 L498,232 L495,230.5 L490,219.6 L474.8,211.8 L453,202.5 L438,200.5 L432,199Z" fill="#6a6a6a"/>
<path d="M398,238 Q440,234 484,240 L482,262 Q440,262 400,260Z" fill="#6a6a6a"/>
<path d="M444.0,241.0 C446.7,238.7 453.3,239.8 458.0,240.0 C462.7,240.2 468.5,240.3 472.0,242.0 C475.5,243.7 478.3,247.2 479.0,250.0 C479.7,252.8 478.5,257.0 476.0,259.0 C473.5,261.0 468.3,261.8 464.0,262.0 C459.7,262.2 453.7,261.3 450.0,260.0 C446.3,258.7 443.0,257.2 442.0,254.0 C441.0,250.8 441.3,243.3 444.0,241.0Z" fill="#868686"/>
<path d="M438.0,241.0 C435.3,238.7 428.7,239.8 424.0,240.0 C419.3,240.2 413.5,240.3 410.0,242.0 C406.5,243.7 403.7,247.3 403.0,250.0 C402.3,252.7 403.5,256.0 406.0,258.0 C408.5,260.0 413.7,261.7 418.0,262.0 C422.3,262.3 428.3,261.3 432.0,260.0 C435.7,258.7 439.0,257.2 440.0,254.0 C441.0,250.8 440.7,243.3 438.0,241.0Z" fill="#868686"/>
<path d="M382.0,206.0 C382.2,201.7 383.3,196.0 385.0,192.0 C386.7,188.0 389.2,185.2 392.0,182.0 C394.8,178.8 398.7,175.3 402.0,173.0 C405.3,170.7 408.2,169.2 412.0,168.0 C415.8,166.8 419.5,165.9 425.0,165.5 C430.5,165.1 439.3,165.1 445.0,165.3 C450.7,165.5 456.7,164.6 459.0,166.5 C461.3,168.4 460.2,174.1 459.0,177.0 C457.8,179.9 455.5,182.2 452.0,184.0 C448.5,185.8 442.7,187.0 438.0,188.0 C433.3,189.0 428.3,189.2 424.0,190.0 C419.7,190.8 415.2,190.8 412.0,193.0 C408.8,195.2 406.3,199.5 405.0,203.0 C403.7,206.5 403.5,210.2 404.0,214.0 C404.5,217.8 406.3,223.0 408.0,226.0 C409.7,229.0 414.2,229.7 414.0,232.0 C413.8,234.3 409.7,238.8 407.0,240.0 C404.3,241.2 401.0,240.7 398.0,239.0 C395.0,237.3 391.3,233.5 389.0,230.0 C386.7,226.5 385.2,222.0 384.0,218.0 C382.8,214.0 381.8,210.3 382.0,206.0Z" fill="#9e9e9e"/>
<path d="M403.5,206.0 C403.0,202.2 403.1,201.2 404.0,199.0 C404.9,196.8 406.2,194.6 409.0,193.0 C411.8,191.4 417.0,189.6 421.0,189.5 C425.0,189.4 430.2,190.8 433.0,192.5 C435.8,194.2 437.3,197.1 438.0,200.0 C438.7,202.9 437.8,207.0 437.0,210.0 C436.2,213.0 434.8,215.2 433.0,218.0 C431.2,220.8 428.8,225.2 426.0,227.0 C423.2,228.8 419.2,229.8 416.0,229.0 C412.8,228.2 409.1,225.8 407.0,222.0 C404.9,218.2 404.0,209.8 403.5,206.0Z" fill="#9a9a9a"/>
<path d="M414,170 Q416,174 414.5,177 Q416,180 415,181" stroke="#404040" stroke-width="1.3" fill="none"/>
<path d="M382.0,206.0 C382.2,201.7 383.3,196.0 385.0,192.0 C386.7,188.0 389.2,185.2 392.0,182.0 C394.8,178.8 398.7,175.3 402.0,173.0 C405.3,170.7 408.2,169.2 412.0,168.0 C415.8,166.8 419.5,165.9 425.0,165.5 C430.5,165.1 439.3,165.1 445.0,165.3 C450.7,165.5 456.7,164.6 459.0,166.5 C461.3,168.4 460.2,174.1 459.0,177.0 C457.8,179.9 455.5,182.2 452.0,184.0 C448.5,185.8 442.7,187.0 438.0,188.0 C433.3,189.0 428.3,189.2 424.0,190.0 C419.7,190.8 415.2,190.8 412.0,193.0 C408.8,195.2 406.3,199.5 405.0,203.0 C403.7,206.5 403.5,210.2 404.0,214.0 C404.5,217.8 406.3,223.0 408.0,226.0 C409.7,229.0 414.2,229.7 414.0,232.0 C413.8,234.3 409.7,238.8 407.0,240.0 C404.3,241.2 401.0,240.7 398.0,239.0 C395.0,237.3 391.3,233.5 389.0,230.0 C386.7,226.5 385.2,222.0 384.0,218.0 C382.8,214.0 381.8,210.3 382.0,206.0Z" stroke="#555" stroke-width="1.2" fill="none"/>
<path d="M464.0,229.0 C464.3,226.0 465.7,220.7 467.0,218.0 C468.3,215.3 470.0,214.0 472.0,213.0 C474.0,212.0 476.8,211.5 479.0,212.0 C481.2,212.5 483.3,213.9 485.0,216.0 C486.7,218.1 488.3,221.7 489.0,224.5 C489.7,227.3 489.2,230.6 489.0,233.0 C488.8,235.4 489.5,237.4 487.7,239.0 C485.9,240.6 480.9,242.2 478.0,242.5 C475.1,242.8 472.2,242.1 470.0,241.0 C467.8,239.9 466.0,238.0 465.0,236.0 C464.0,234.0 463.7,232.0 464.0,229.0Z" fill="#939393"/>
<ellipse cx="474" cy="224" rx="3.5" ry="5" fill="#585858"/>
<circle cx="447" cy="196" r="3" fill="#a0a0a0"/><circle cx="462" cy="197" r="2.5" fill="#909090"/><ellipse cx="456" cy="224" rx="5" ry="14" fill="#8c8c8c"/><circle cx="492" cy="212" r="3" fill="#8a8a8a"/>
<path d="M498,192 L506,203 L511,222 L505,240 L493,253 L484,252 L493,237 L498,226 L497,210Z" fill="#585858"/>
<circle cx="487" cy="196.7" r="1.4" fill="#000"/><circle cx="487" cy="203.3" r="1.4" fill="#000"/>
<ellipse cx="441.7" cy="222" rx="10" ry="9.8" fill="#e6e6e6"/><ellipse cx="441.7" cy="221" rx="6" ry="6" fill="#d0d0d0"/><path d="M434,229 Q441,227 449,229 L451,236 Q447,242 441,242 Q435,242 432,236Z" fill="#e8e8e8"/>
<path d="M452,244 Q460,250 470,248 M448,252 Q458,258 468,256 M430,244 Q420,250 412,247 M433,252 Q422,258 412,255 M458,240 L456,262 M420,240 L424,262" stroke="#5a5a5a" stroke-width="0.8" fill="none"/>
<path d="M423.5,236.5 L434,234.5 L436,238 L424,238Z M448,234.5 L463.5,240 L463,241.5 L447,238.5Z M439.5,240 L443,240 L442.5,254 L440,254Z" fill="#e4e4e4"/>
<circle cx="441" cy="252.5" r="1.6" fill="#fff"/>
<ellipse cx="386" cy="230" rx="1.4" ry="3" fill="#e0e0e0"/><ellipse cx="395" cy="238.5" rx="2" ry="1.2" fill="#ddd"/>
<ellipse cx="498.5" cy="237.5" rx="1.2" ry="3" fill="#eee" transform="rotate(40 498.5 237.5)"/><ellipse cx="506" cy="206.5" rx="1.2" ry="2.5" fill="#eee"/>
</g>
<rect x="365" y="150" width="160" height="125" filter="url(#nz)" opacity="0.18"/>
<path d="M459.0,176.0 C459.5,173.2 461.2,170.6 463.0,169.0 C464.8,167.4 467.5,166.8 470.0,166.5 C472.5,166.2 475.5,166.1 478.0,167.0 C480.5,167.9 483.4,169.8 485.0,172.0 C486.6,174.2 487.5,177.3 487.5,180.0 C487.5,182.7 486.9,186.2 485.0,188.0 C483.1,189.8 479.2,190.7 476.0,191.0 C472.8,191.3 468.7,190.8 466.0,190.0 C463.3,189.2 461.2,188.3 460.0,186.0 C458.8,183.7 458.5,178.8 459.0,176.0Z" fill="#000" stroke="#4aa0c8" stroke-width="0.7"/>
<ellipse cx="458" cy="187" rx="5" ry="3" fill="#080808"/>
<path d="M436.0,234.5 C436.0,233.2 437.2,231.6 438.5,231.0 C439.8,230.4 442.7,230.4 444.0,231.0 C445.3,231.6 446.5,233.2 446.5,234.5 C446.5,235.8 445.3,237.8 444.0,238.5 C442.7,239.2 439.8,239.2 438.5,238.5 C437.2,237.8 436.0,235.8 436.0,234.5Z" fill="#8a8a8a" stroke="#e6e040" stroke-width="0.7"/>
</g>
<path d="M382.0,206.0 C382.2,201.7 383.3,196.0 385.0,192.0 C386.7,188.0 389.2,185.2 392.0,182.0 C394.8,178.8 398.7,175.3 402.0,173.0 C405.3,170.7 408.2,169.2 412.0,168.0 C415.8,166.8 419.5,165.9 425.0,165.5 C430.5,165.1 439.3,165.1 445.0,165.3 C450.7,165.5 456.7,164.6 459.0,166.5 C461.3,168.4 460.2,174.1 459.0,177.0 C457.8,179.9 455.5,182.2 452.0,184.0 C448.5,185.8 442.7,187.0 438.0,188.0 C433.3,189.0 428.3,189.2 424.0,190.0 C419.7,190.8 415.2,190.8 412.0,193.0 C408.8,195.2 406.3,199.5 405.0,203.0 C403.7,206.5 403.5,210.2 404.0,214.0 C404.5,217.8 406.3,223.0 408.0,226.0 C409.7,229.0 414.2,229.7 414.0,232.0 C413.8,234.3 409.7,238.8 407.0,240.0 C404.3,241.2 401.0,240.7 398.0,239.0 C395.0,237.3 391.3,233.5 389.0,230.0 C386.7,226.5 385.2,222.0 384.0,218.0 C382.8,214.0 381.8,210.3 382.0,206.0Z" stroke="#8a5a50" stroke-width="0.45"/>
<path d="M403.5,206.0 C403.0,202.2 403.1,201.2 404.0,199.0 C404.9,196.8 406.2,194.6 409.0,193.0 C411.8,191.4 417.0,189.6 421.0,189.5 C425.0,189.4 430.2,190.8 433.0,192.5 C435.8,194.2 437.3,197.1 438.0,200.0 C438.7,202.9 437.8,207.0 437.0,210.0 C436.2,213.0 434.8,215.2 433.0,218.0 C431.2,220.8 428.8,225.2 426.0,227.0 C423.2,228.8 419.2,229.8 416.0,229.0 C412.8,228.2 409.1,225.8 407.0,222.0 C404.9,218.2 404.0,209.8 403.5,206.0Z" stroke="#3a3ad0" stroke-width="0.6"/>
<path d="M406.5,207.0 C406.7,204.3 406.9,201.2 408.0,199.0 C409.1,196.8 410.8,195.0 413.0,194.0 C415.2,193.0 418.2,192.7 421.0,193.0 C423.8,193.3 427.7,194.3 430.0,196.0 C432.3,197.7 434.5,200.0 435.0,203.0 C435.5,206.0 434.3,210.8 433.0,214.0 C431.7,217.2 429.3,220.0 427.0,222.0 C424.7,224.0 421.7,226.0 419.0,226.0 C416.3,226.0 413.0,223.8 411.0,222.0 C409.0,220.2 407.8,217.5 407.0,215.0 C406.2,212.5 406.3,209.7 406.5,207.0Z" stroke="#d83030" stroke-width="0.6"/>
<circle cx="434" cy="207" r="3.8" stroke="#d040a0" stroke-width="0.5"/>
<path d="M464.0,229.0 C464.3,226.0 465.7,220.7 467.0,218.0 C468.3,215.3 470.0,214.0 472.0,213.0 C474.0,212.0 476.8,211.5 479.0,212.0 C481.2,212.5 483.3,213.9 485.0,216.0 C486.7,218.1 488.3,221.7 489.0,224.5 C489.7,227.3 489.2,230.6 489.0,233.0 C488.8,235.4 489.5,237.4 487.7,239.0 C485.9,240.6 480.9,242.2 478.0,242.5 C475.1,242.8 472.2,242.1 470.0,241.0 C467.8,239.9 466.0,238.0 465.0,236.0 C464.0,234.0 463.7,232.0 464.0,229.0Z" stroke="#c070c0" stroke-width="0.5"/>
<path d="M419.0,188.5 C420.3,186.8 433.3,188.5 440.0,189.0 C446.7,189.5 453.2,191.6 459.0,191.6 C464.8,191.6 469.8,190.1 475.0,189.0 C480.2,187.9 485.9,184.1 490.0,185.0 C494.1,185.9 497.4,190.5 499.7,194.7 C502.0,198.9 503.3,204.8 504.0,210.0 C504.7,215.2 505.0,222.1 504.0,225.8 C503.0,229.5 499.5,231.2 498.0,232.0 C496.5,232.8 496.3,232.6 495.0,230.5 C493.7,228.4 493.4,222.7 490.0,219.6 C486.6,216.5 481.0,214.7 474.8,211.8 C468.6,209.0 459.1,204.4 453.0,202.5 C446.9,200.6 441.5,201.1 438.0,200.5 C434.5,199.9 435.2,201.0 432.0,199.0 C428.8,197.0 417.7,190.2 419.0,188.5Z" stroke="#28a028" stroke-width="0.5"/>
<path d="M368.5,205.0 C367.7,210.8 367.6,214.5 369.0,220.0 C370.4,225.5 373.5,232.2 376.7,238.0 C379.9,243.8 384.1,250.2 388.0,255.0 C391.9,259.8 396.3,263.7 400.0,266.5 C403.7,269.3 406.2,271.7 410.0,272.0 C413.8,272.3 418.2,270.2 423.0,268.5 C427.8,266.8 433.7,262.3 438.5,262.0 C443.3,261.7 446.2,265.0 452.0,266.5 C457.8,268.0 467.0,270.7 473.0,271.0 C479.0,271.3 483.5,270.6 488.0,268.5 C492.5,266.4 496.3,262.9 500.0,258.5 C503.7,254.1 507.3,247.6 510.0,242.0 C512.7,236.4 514.7,230.8 516.0,225.0 C517.3,219.2 518.5,212.8 518.0,207.0 C517.5,201.2 515.7,195.7 513.0,190.0 C510.3,184.3 506.3,178.2 502.0,173.0 C497.7,167.8 492.2,162.1 487.0,159.0 C481.8,155.9 476.7,155.3 471.0,154.5 C465.3,153.7 460.3,153.8 453.0,154.0 C445.7,154.2 435.2,154.9 427.0,156.0 C418.8,157.1 410.8,157.9 403.5,160.5 C396.2,163.1 387.9,167.3 383.0,171.5 C378.1,175.7 376.4,179.9 374.0,185.5 C371.6,191.1 369.3,199.2 368.5,205.0Z" stroke="#1fa01f" stroke-width="0.8"/>
<!-- beam lines -->
<path d="M320.2,224.6 A100,100 0 1 1 515.1,236.6" stroke="#6a5c0c" stroke-width="0.5"/>
<path d="M417.7,109.8 L524,200 L516,213" stroke="#2a9a2a" stroke-width="0.5"/>
<path d="M414,114.2 L417.7,109.8 M414,114.2 L520,203" stroke="#2a8a2a" stroke-width="0.4"/>
<path d="M414,113.3 L360.8,160.4" stroke="#a89a20" stroke-width="0.5"/>
<path d="M306.7,168.4 L405,139.5" stroke="#a89a20" stroke-width="0.5"/>
<path d="M306.7,168.4 L330,285" stroke="#a06a10" stroke-width="0.5"/>
<path d="M343.3,208.9 L353.3,284" stroke="#a09020" stroke-width="0.45"/>
<path d="M325,284.6 L434,284.6" stroke="#a06a10" stroke-width="0.5"/>
<path d="M353,278.6 L430,279 L430,284 L353,284Z M437,280 L490,280 L490,286 L437,286Z" stroke="#2a8a2a" stroke-width="0.45"/>
<path d="M473,145 L403,235" stroke="#b8b020" stroke-width="0.5"/>
<path d="M480,150 L412,240" stroke="#9a6a10" stroke-width="0.4"/>
<path d="M321,225.5 L419,210 L540,193" stroke="#8a7a10" stroke-width="0.4"/>
<path d="M419,209 L537,230.5" stroke="#8a7a10" stroke-width="0.4"/>
<path d="M408,212 L408,290 M418.5,212 L418.5,292 M424,214 L425,292 M433,230 L432,290" stroke="#b07a20" stroke-width="0.45"/>
<path d="M516,210 L524,210 L522,229 L510,232" stroke="#a89a20" stroke-width="0.5"/>
<path d="M502,210.7 L490.8,286.7 M516.7,209.3 L483.3,262.7" stroke="#a89a20" stroke-width="0.5"/>
<path d="M496.7,180 Q506,188 510,196 Q517,208 518,217 Q515,232 507.3,244 Q498,255 486,260" stroke="#2a9a2a" stroke-width="0.5"/>
<!-- gantry arc -->
<path d="M464.3,156.1 A69.7,69.7 0 1 0 418.3,279.2" stroke="#5a5412" stroke-width="4.8" stroke-dasharray="0.45,2.1"/>
<path d="M462.8,157.9 A67.3,67.3 0 1 0 418.3,276.8" stroke="#c0b828" stroke-width="0.6"/>
<path d="M463.8,156.7 A68.9,68.9 0 1 0 418.3,278.4" stroke="#cec630" stroke-width="0.6"/>
<path d="M464.8,155.5 A70.5,70.5 0 1 0 418.3,280.0" stroke="#bab224" stroke-width="0.6"/>
<path d="M465.8,154.3 A72.1,72.1 0 1 0 418.2,281.6" stroke="#a49c1c" stroke-width="0.55"/>
<path d="M464.5,155.9 A70,70 0 0 0 419.5,139.5" stroke="#b8b024" stroke-width="5.4" stroke-dasharray="0.8,2.3"/>
<circle cx="304.5" cy="169.5" r="1" fill="#2a2"/>
<!-- markers -->
<rect x="417.2" y="52.2" width="4.4" height="5" fill="#30c030"/><line x1="419.4" y1="52.2" x2="419.4" y2="57.2" stroke="#8a5a10" stroke-width="0.7"/>
<rect x="417.2" y="364" width="4.4" height="4.6" fill="#30c030"/><line x1="419.4" y1="364" x2="419.4" y2="368.6" stroke="#8a5a10" stroke-width="0.7"/>
<rect x="88.9" y="207.3" width="4.4" height="4.7" fill="#30c030"/><line x1="88.9" y1="209.6" x2="93.3" y2="209.6" stroke="#a0a020" stroke-width="0.7"/>
<rect x="795.5" y="207.3" width="4.5" height="4.7" fill="#30c030"/><line x1="795.5" y1="209.6" x2="800" y2="209.6" stroke="#a0a020" stroke-width="0.7"/>
<!-- orientation figure -->
<path d="M131,338 L131,311.7 L157,311.7" stroke="#7a8a10" stroke-width="0.6"/>
<circle cx="115" cy="348" r="3" fill="#22e022"/><circle cx="118.5" cy="348" r="3" fill="#22e022"/>
<circle cx="148.5" cy="348" r="2.8" fill="#f02020"/><circle cx="145" cy="348" r="3" fill="#22e022"/>
<circle cx="141.5" cy="348" r="3" fill="#22e022"/><circle cx="121.5" cy="348" r="3" fill="#22e022"/>
<circle cx="131.2" cy="348.2" r="9.8" fill="#22e022"/>
<circle cx="121" cy="344.7" r="2.5" fill="#30e0f0"/><circle cx="141.5" cy="344.7" r="2.5" fill="#30e0f0"/>
<!-- labels -->
<text x="467" y="153" transform="rotate(40 467 153)" font-family="Liberation Sans" font-size="5.5" fill="#e01010" text-anchor="middle">Field 1</text>
<text x="318" y="228.5" transform="rotate(-84 318 228.5)" font-family="Liberation Sans" font-size="6" fill="#e01010" text-anchor="middle">MVCBCT</text>
<text x="418" y="285" font-family="Liberation Sans" font-size="4.5" fill="#e01010" text-anchor="middle">Field 3</text>
</g>
</svg>
<svg class="a" style="left:0;top:0" width="800" height="450" viewBox="0 0 800 450"><g font-family="Liberation Sans" fill="#d80808"><text x="442.6" y="63.2" font-size="8.2">A</text><text x="443.5" y="365.1" font-size="8.2">P</text><text x="94.6" y="213.9" font-size="8" font-weight="bold">R</text><text x="790.5" y="213.9" font-size="8">L</text></g></svg>
<div class="t" style="left:742px;top:53.0px;font-size:5px;font-weight:bold;color:#e00808;transform:scaleX(0.89);transform-origin:0 0">3D Dose MAX: 108.7 %</div>
<div class="t" style="left:742px;top:59.3px;font-size:5px;font-weight:bold;color:#e00808;transform:scaleX(0.89);transform-origin:0 0">3D MAX for PTV: 108.7 %</div>
<div class="t" style="left:742px;top:65.6px;font-size:5px;font-weight:bold;color:#e00808;transform:scaleX(0.89);transform-origin:0 0">3D MIN for PTV: 85.0 %</div>
<div class="t" style="left:742px;top:71.4px;font-size:5px;font-weight:bold;color:#e00808;transform:scaleX(0.89);transform-origin:0 0">3D MEAN for PTV: 101.1 %</div>
<div class="t" style="left:763px;top:80.9px;font-size:4.6px;font-weight:bold;color:#e0d000;transform:scaleX(0.9);transform-origin:0 0">Transport in</div>
<div class="t" style="left:763px;top:85.8px;font-size:4.6px;font-weight:bold;color:#e0d000;transform:scaleX(0.9);transform-origin:0 0">medium</div>
<div class="t" style="left:763px;top:90.7px;font-size:4.6px;font-weight:bold;color:#e0d000;transform:scaleX(0.9);transform-origin:0 0">Dose to medium</div>
<div class="t" style="left:158px;top:309px;font-size:4.3px;font-weight:bold;color:#d80a0a">Standard</div>
<div class="t" style="left:210px;top:356.5px;font-size:4.2px;font-weight:bold;color:#d80a0a">Head First-Supine</div>
<div class="t" style="left:210px;top:361.5px;font-size:4.2px;font-weight:bold;color:#d80a0a">Z: -4.28 cm</div>
<div class="a" style="left:0;top:368.5px;width:800px;height:66px;background:#fff"></div>
<div class="a" style="left:0;top:419.5px;width:800px;height:9px;background:#f8f9fa"></div>
<div class="a" style="left:1px;top:369.5px;width:20px;height:9px;background:#fff;border:0.5px solid #cfd4da;border-bottom:none"></div>
<div class="a" style="left:20.9px;top:370.5px;width:0.6px;height:7.5px;background:#c4c8ce"></div>
<div class="a" style="left:40.4px;top:370.5px;width:0.6px;height:7.5px;background:#c4c8ce"></div>
<div class="a" style="left:86.2px;top:370.5px;width:0.6px;height:7.5px;background:#c4c8ce"></div>
<div class="a" style="left:125.5px;top:370.5px;width:0.6px;height:7.5px;background:#c4c8ce"></div>
<div class="a" style="left:186.6px;top:370.5px;width:0.6px;height:7.5px;background:#c4c8ce"></div>
<div class="a" style="left:222.6px;top:370.5px;width:0.6px;height:7.5px;background:#c4c8ce"></div>
<div class="a" style="left:263.6px;top:370.5px;width:0.6px;height:7.5px;background:#c4c8ce"></div>
<div class="a" style="left:310.4px;top:370.5px;width:0.6px;height:7.5px;background:#c4c8ce"></div>
<div class="a" style="left:334.5px;top:370.5px;width:0.6px;height:7.5px;background:#c4c8ce"></div>
<div class="t" style="left:4.7px;top:372.3px;font-size:4.8px;color:#2a62b0;font-weight:bold;">Fields</div>
<div class="t" style="left:25.5px;top:372.3px;font-size:4.8px;color:#333;">Dose</div>
<div class="a" style="left:42.5px;top:371.2px;width:4px;height:4px;border:0.5px solid #777;background:#fff"></div>
<div class="t" style="left:47.9px;top:372.3px;font-size:4.8px;color:#333;">Field Alignments</div>
<div class="a" style="left:88.5px;top:371.2px;width:4px;height:4px;border:0.5px solid #777;background:#fff"></div>
<div class="t" style="left:94px;top:372.3px;font-size:4.8px;color:#333;">Clinical Goals</div>
<div class="a" style="left:127.2px;top:371.2px;width:4px;height:4px;border:0.5px solid #777;background:#fff"></div>
<div class="t" style="left:133px;top:372.3px;font-size:4.8px;color:#333;">Optimization Objectives</div>
<div class="t" style="left:190px;top:372.3px;font-size:4.8px;color:#333;">Dose Statistics</div>
<div class="t" style="left:226px;top:372.3px;font-size:4.8px;color:#333;">Reference Points</div>
<div class="t" style="left:267px;top:372.3px;font-size:4.8px;color:#333;">Calculation Models</div>
<div class="t" style="left:313px;top:372.3px;font-size:4.8px;color:#333;">Plan Sum</div>
<div class="a" style="left:1px;top:378.5px;width:798px;height:11px;background:#7f8ba3"></div>
<div class="a" style="left:1px;top:389.5px;width:798px;height:30px;background:#d6dee8"></div>
<div class="a" style="left:45.5px;top:378.5px;width:0.7px;height:40.3px;background:#a8b3c4"></div>
<div class="a" style="left:1px;top:381.9px;width:45px;text-align:center;font-size:4.3px;line-height:5.3px;color:#e4e8ee">Group</div>
<div class="a" style="left:100.5px;top:378.5px;width:0.7px;height:40.3px;background:#a8b3c4"></div>
<div class="a" style="left:46px;top:381.9px;width:55px;text-align:center;font-size:4.3px;line-height:5.3px;color:#e4e8ee">Field ID</div>
<div class="a" style="left:164.5px;top:378.5px;width:0.7px;height:40.3px;background:#a8b3c4"></div>
<div class="a" style="left:101px;top:381.9px;width:64px;text-align:center;font-size:4.3px;line-height:5.3px;color:#e4e8ee">Technique</div>
<div class="a" style="left:238.5px;top:378.5px;width:0.7px;height:40.3px;background:#a8b3c4"></div>
<div class="a" style="left:165px;top:381.9px;width:74px;text-align:center;font-size:4.3px;line-height:5.3px;color:#e4e8ee">Machine/Energy</div>
<div class="a" style="left:287.0px;top:378.5px;width:0.7px;height:40.3px;background:#a8b3c4"></div>
<div class="a" style="left:239px;top:381.9px;width:48.5px;text-align:center;font-size:4.3px;line-height:5.3px;color:#e4e8ee">MLC</div>
<div class="a" style="left:344.0px;top:378.5px;width:0.7px;height:40.3px;background:#a8b3c4"></div>
<div class="a" style="left:287.5px;top:381.9px;width:57.0px;text-align:center;font-size:4.3px;line-height:5.3px;color:#e4e8ee">Field Weight</div>
<div class="a" style="left:398.5px;top:378.5px;width:0.7px;height:40.3px;background:#a8b3c4"></div>
<div class="a" style="left:344.5px;top:381.9px;width:54.5px;text-align:center;font-size:4.3px;line-height:5.3px;color:#e4e8ee">Scale</div>
<div class="a" style="left:467.0px;top:378.5px;width:0.7px;height:40.3px;background:#a8b3c4"></div>
<div class="a" style="left:399px;top:379.3px;width:68.5px;text-align:center;font-size:4.3px;line-height:5.3px;color:#e4e8ee">Gantry Rtn<br>[deg]</div>
<div class="a" style="left:515.5px;top:378.5px;width:0.7px;height:40.3px;background:#a8b3c4"></div>
<div class="a" style="left:467.5px;top:379.3px;width:48.5px;text-align:center;font-size:4.3px;line-height:5.3px;color:#e4e8ee">Coll Rtn<br>[deg]</div>
<div class="a" style="left:562.0px;top:378.5px;width:0.7px;height:40.3px;background:#a8b3c4"></div>
<div class="a" style="left:516px;top:381.9px;width:46.5px;text-align:center;font-size:4.3px;line-height:5.3px;color:#e4e8ee">X [cm]</div>
<div class="a" style="left:608.25px;top:378.5px;width:0.7px;height:40.3px;background:#a8b3c4"></div>
<div class="a" style="left:562.5px;top:381.9px;width:46.25px;text-align:center;font-size:4.3px;line-height:5.3px;color:#e4e8ee">Y [cm]</div>
<div class="a" style="left:654.0px;top:378.5px;width:0.7px;height:40.3px;background:#a8b3c4"></div>
<div class="a" style="left:608.75px;top:381.9px;width:45.75px;text-align:center;font-size:4.3px;line-height:5.3px;color:#e4e8ee">Z [cm]</div>
<div class="a" style="left:707.0px;top:378.5px;width:0.7px;height:40.3px;background:#a8b3c4"></div>
<div class="a" style="left:654.5px;top:379.3px;width:53.0px;text-align:center;font-size:4.3px;line-height:5.3px;color:#e4e8ee">Calculated<br>SSD [cm]</div>
<div class="a" style="left:754.0px;top:378.5px;width:0.7px;height:40.3px;background:#a8b3c4"></div>
<div class="a" style="left:707.5px;top:381.9px;width:47.0px;text-align:center;font-size:4.3px;line-height:5.3px;color:#e4e8ee">MU</div>
<div class="a" style="left:798.5px;top:378.5px;width:0.7px;height:40.3px;background:#a8b3c4"></div>
<div class="a" style="left:754.5px;top:379.3px;width:44.5px;text-align:center;font-size:4.3px;line-height:5.3px;color:#e4e8ee">Ref. D<br>[Gy]</div>
<div class="a" style="left:1px;top:394.8px;width:798px;height:0.6px;background:#b0bccc"></div>
<div class="t" style="left:1px;top:391.0px;width:45px;text-align:center;font-size:4.8px;letter-spacing:-0.1px;color:#2a2a2a">I</div>
<div class="t" style="left:46px;top:391.0px;width:55px;text-align:center;font-size:4.8px;letter-spacing:-0.1px;color:#2a2a2a">MVCBCT</div>
<div class="t" style="left:101px;top:391.0px;width:64px;text-align:center;font-size:4.8px;letter-spacing:-0.1px;color:#2a2a2a">Arc Therapy-I</div>
<div class="t" style="left:165px;top:391.0px;width:74px;text-align:center;font-size:4.8px;letter-spacing:-0.1px;color:#2a2a2a">HAL1226 - 6X-FFF</div>
<div class="t" style="left:239px;top:391.0px;width:48.5px;text-align:center;font-size:4.8px;letter-spacing:-0.1px;color:#2a2a2a">Static</div>
<div class="t" style="left:287.5px;top:391.0px;width:55.0px;text-align:right;font-size:4.8px;letter-spacing:-0.1px;color:#2a2a2a">0.030</div>
<div class="t" style="left:344.5px;top:391.0px;width:54.5px;text-align:center;font-size:4.8px;letter-spacing:-0.1px;color:#2a2a2a">IEC61217</div>
<div class="t" style="left:399px;top:391.0px;width:66.5px;text-align:right;font-size:4.8px;letter-spacing:-0.1px;color:#2a2a2a">260.0 CW 100.0</div>
<div class="t" style="left:467.5px;top:391.0px;width:46.5px;text-align:right;font-size:4.8px;letter-spacing:-0.1px;color:#2a2a2a">0.0</div>
<div class="t" style="left:516px;top:391.0px;width:44.5px;text-align:right;font-size:4.8px;letter-spacing:-0.1px;color:#2a2a2a">-4.82</div>
<div class="t" style="left:562.5px;top:391.0px;width:44.25px;text-align:right;font-size:4.8px;letter-spacing:-0.1px;color:#2a2a2a">-0.29</div>
<div class="t" style="left:608.75px;top:391.0px;width:43.75px;text-align:right;font-size:4.8px;letter-spacing:-0.1px;color:#2a2a2a">-2.39</div>
<div class="t" style="left:654.5px;top:391.0px;width:51.0px;text-align:right;font-size:4.8px;letter-spacing:-0.1px;color:#2a2a2a">90.5</div>
<div class="t" style="left:707.5px;top:391.0px;width:45.0px;text-align:right;font-size:4.8px;letter-spacing:-0.1px;color:#2a2a2a">10.0</div>
<div class="t" style="left:754.5px;top:391.0px;width:42.5px;text-align:right;font-size:4.8px;letter-spacing:-0.1px;color:#2a2a2a"></div>
<div class="a" style="left:1px;top:400.7px;width:798px;height:0.6px;background:#b0bccc"></div>
<div class="t" style="left:1px;top:396.9px;width:45px;text-align:center;font-size:4.8px;letter-spacing:-0.1px;color:#2a2a2a">I</div>
<div class="t" style="left:46px;top:396.9px;width:55px;text-align:center;font-size:4.8px;letter-spacing:-0.1px;color:#2a2a2a">Field 1</div>
<div class="t" style="left:101px;top:396.9px;width:64px;text-align:center;font-size:4.8px;letter-spacing:-0.1px;color:#2a2a2a">Arc Therapy-I</div>
<div class="t" style="left:165px;top:396.9px;width:74px;text-align:center;font-size:4.8px;letter-spacing:-0.1px;color:#2a2a2a">HAL1226 - 6X-FFF</div>
<div class="t" style="left:239px;top:396.9px;width:48.5px;text-align:center;font-size:4.8px;letter-spacing:-0.1px;color:#2a2a2a">VMAT</div>
<div class="t" style="left:287.5px;top:396.9px;width:55.0px;text-align:right;font-size:4.8px;letter-spacing:-0.1px;color:#2a2a2a">0.947</div>
<div class="t" style="left:344.5px;top:396.9px;width:54.5px;text-align:center;font-size:4.8px;letter-spacing:-0.1px;color:#2a2a2a">IEC61217</div>
<div class="t" style="left:399px;top:396.9px;width:66.5px;text-align:right;font-size:4.8px;letter-spacing:-0.1px;color:#2a2a2a">40.0 CCW 181.0</div>
<div class="t" style="left:467.5px;top:396.9px;width:46.5px;text-align:right;font-size:4.8px;letter-spacing:-0.1px;color:#2a2a2a">293.0</div>
<div class="t" style="left:516px;top:396.9px;width:44.5px;text-align:right;font-size:4.8px;letter-spacing:-0.1px;color:#2a2a2a">-4.82</div>
<div class="t" style="left:562.5px;top:396.9px;width:44.25px;text-align:right;font-size:4.8px;letter-spacing:-0.1px;color:#2a2a2a">-0.29</div>
<div class="t" style="left:608.75px;top:396.9px;width:43.75px;text-align:right;font-size:4.8px;letter-spacing:-0.1px;color:#2a2a2a">-2.39</div>
<div class="t" style="left:654.5px;top:396.9px;width:51.0px;text-align:right;font-size:4.8px;letter-spacing:-0.1px;color:#2a2a2a">86.8</div>
<div class="t" style="left:707.5px;top:396.9px;width:45.0px;text-align:right;font-size:4.8px;letter-spacing:-0.1px;color:#2a2a2a">159.4</div>
<div class="t" style="left:754.5px;top:396.9px;width:42.5px;text-align:right;font-size:4.8px;letter-spacing:-0.1px;color:#2a2a2a"></div>
<div class="a" style="left:1px;top:406.5px;width:798px;height:0.6px;background:#b0bccc"></div>
<div class="t" style="left:1px;top:402.7px;width:45px;text-align:center;font-size:4.8px;letter-spacing:-0.1px;color:#2a2a2a">I</div>
<div class="t" style="left:46px;top:402.7px;width:55px;text-align:center;font-size:4.8px;letter-spacing:-0.1px;color:#2a2a2a">Field 2</div>
<div class="t" style="left:101px;top:402.7px;width:64px;text-align:center;font-size:4.8px;letter-spacing:-0.1px;color:#2a2a2a">Arc Therapy-I</div>
<div class="t" style="left:165px;top:402.7px;width:74px;text-align:center;font-size:4.8px;letter-spacing:-0.1px;color:#2a2a2a">HAL1226 - 6X-FFF</div>
<div class="t" style="left:239px;top:402.7px;width:48.5px;text-align:center;font-size:4.8px;letter-spacing:-0.1px;color:#2a2a2a">VMAT</div>
<div class="t" style="left:287.5px;top:402.7px;width:55.0px;text-align:right;font-size:4.8px;letter-spacing:-0.1px;color:#2a2a2a">0.741</div>
<div class="t" style="left:344.5px;top:402.7px;width:54.5px;text-align:center;font-size:4.8px;letter-spacing:-0.1px;color:#2a2a2a">IEC61217</div>
<div class="t" style="left:399px;top:402.7px;width:66.5px;text-align:right;font-size:4.8px;letter-spacing:-0.1px;color:#2a2a2a">181.0 CW 40.0</div>
<div class="t" style="left:467.5px;top:402.7px;width:46.5px;text-align:right;font-size:4.8px;letter-spacing:-0.1px;color:#2a2a2a">338.0</div>
<div class="t" style="left:516px;top:402.7px;width:44.5px;text-align:right;font-size:4.8px;letter-spacing:-0.1px;color:#2a2a2a">-4.82</div>
<div class="t" style="left:562.5px;top:402.7px;width:44.25px;text-align:right;font-size:4.8px;letter-spacing:-0.1px;color:#2a2a2a">-0.29</div>
<div class="t" style="left:608.75px;top:402.7px;width:43.75px;text-align:right;font-size:4.8px;letter-spacing:-0.1px;color:#2a2a2a">-2.39</div>
<div class="t" style="left:654.5px;top:402.7px;width:51.0px;text-align:right;font-size:4.8px;letter-spacing:-0.1px;color:#2a2a2a">87.8</div>
<div class="t" style="left:707.5px;top:402.7px;width:45.0px;text-align:right;font-size:4.8px;letter-spacing:-0.1px;color:#2a2a2a">148.2</div>
<div class="t" style="left:754.5px;top:402.7px;width:42.5px;text-align:right;font-size:4.8px;letter-spacing:-0.1px;color:#2a2a2a"></div>
<div class="a" style="left:1px;top:412.4px;width:798px;height:0.6px;background:#b0bccc"></div>
<div class="t" style="left:1px;top:408.6px;width:45px;text-align:center;font-size:4.8px;letter-spacing:-0.1px;color:#2a2a2a">I</div>
<div class="t" style="left:46px;top:408.6px;width:55px;text-align:center;font-size:4.8px;letter-spacing:-0.1px;color:#2a2a2a">Field 3</div>
<div class="t" style="left:101px;top:408.6px;width:64px;text-align:center;font-size:4.8px;letter-spacing:-0.1px;color:#2a2a2a">Arc Therapy-I</div>
<div class="t" style="left:165px;top:408.6px;width:74px;text-align:center;font-size:4.8px;letter-spacing:-0.1px;color:#2a2a2a">HAL1226 - 6X-FFF</div>
<div class="t" style="left:239px;top:408.6px;width:48.5px;text-align:center;font-size:4.8px;letter-spacing:-0.1px;color:#2a2a2a">VMAT</div>
<div class="t" style="left:287.5px;top:408.6px;width:55.0px;text-align:right;font-size:4.8px;letter-spacing:-0.1px;color:#2a2a2a">0.739</div>
<div class="t" style="left:344.5px;top:408.6px;width:54.5px;text-align:center;font-size:4.8px;letter-spacing:-0.1px;color:#2a2a2a">IEC61217</div>
<div class="t" style="left:399px;top:408.6px;width:66.5px;text-align:right;font-size:4.8px;letter-spacing:-0.1px;color:#2a2a2a">40.0 CCW 181.0</div>
<div class="t" style="left:467.5px;top:408.6px;width:46.5px;text-align:right;font-size:4.8px;letter-spacing:-0.1px;color:#2a2a2a">23.0</div>
<div class="t" style="left:516px;top:408.6px;width:44.5px;text-align:right;font-size:4.8px;letter-spacing:-0.1px;color:#2a2a2a">-4.82</div>
<div class="t" style="left:562.5px;top:408.6px;width:44.25px;text-align:right;font-size:4.8px;letter-spacing:-0.1px;color:#2a2a2a">-0.29</div>
<div class="t" style="left:608.75px;top:408.6px;width:43.75px;text-align:right;font-size:4.8px;letter-spacing:-0.1px;color:#2a2a2a">-2.39</div>
<div class="t" style="left:654.5px;top:408.6px;width:51.0px;text-align:right;font-size:4.8px;letter-spacing:-0.1px;color:#2a2a2a">86.8</div>
<div class="t" style="left:707.5px;top:408.6px;width:45.0px;text-align:right;font-size:4.8px;letter-spacing:-0.1px;color:#2a2a2a">147.8</div>
<div class="t" style="left:754.5px;top:408.6px;width:42.5px;text-align:right;font-size:4.8px;letter-spacing:-0.1px;color:#2a2a2a"></div>
<div class="t" style="left:1px;top:414.4px;width:45px;text-align:center;font-size:4.8px;letter-spacing:-0.1px;color:#2a2a2a">I</div>
<div class="t" style="left:46px;top:414.4px;width:55px;text-align:center;font-size:4.8px;letter-spacing:-0.1px;color:#2a2a2a">Field 4</div>
<div class="t" style="left:101px;top:414.4px;width:64px;text-align:center;font-size:4.8px;letter-spacing:-0.1px;color:#2a2a2a">Arc Therapy-I</div>
<div class="t" style="left:165px;top:414.4px;width:74px;text-align:center;font-size:4.8px;letter-spacing:-0.1px;color:#2a2a2a">HAL1226 - 6X-FFF</div>
<div class="t" style="left:239px;top:414.4px;width:48.5px;text-align:center;font-size:4.8px;letter-spacing:-0.1px;color:#2a2a2a">VMAT</div>
<div class="t" style="left:287.5px;top:414.4px;width:55.0px;text-align:right;font-size:4.8px;letter-spacing:-0.1px;color:#2a2a2a">0.822</div>
<div class="t" style="left:344.5px;top:414.4px;width:54.5px;text-align:center;font-size:4.8px;letter-spacing:-0.1px;color:#2a2a2a">IEC61217</div>
<div class="t" style="left:399px;top:414.4px;width:66.5px;text-align:right;font-size:4.8px;letter-spacing:-0.1px;color:#2a2a2a">181.0 CW 40.0</div>
<div class="t" style="left:467.5px;top:414.4px;width:46.5px;text-align:right;font-size:4.8px;letter-spacing:-0.1px;color:#2a2a2a">68.0</div>
<div class="t" style="left:516px;top:414.4px;width:44.5px;text-align:right;font-size:4.8px;letter-spacing:-0.1px;color:#2a2a2a">-4.82</div>
<div class="t" style="left:562.5px;top:414.4px;width:44.25px;text-align:right;font-size:4.8px;letter-spacing:-0.1px;color:#2a2a2a">-0.29</div>
<div class="t" style="left:608.75px;top:414.4px;width:43.75px;text-align:right;font-size:4.8px;letter-spacing:-0.1px;color:#2a2a2a">-2.39</div>
<div class="t" style="left:654.5px;top:414.4px;width:51.0px;text-align:right;font-size:4.8px;letter-spacing:-0.1px;color:#2a2a2a">87.8</div>
<div class="t" style="left:707.5px;top:414.4px;width:45.0px;text-align:right;font-size:4.8px;letter-spacing:-0.1px;color:#2a2a2a">164.5</div>
<div class="t" style="left:754.5px;top:414.4px;width:42.5px;text-align:right;font-size:4.8px;letter-spacing:-0.1px;color:#2a2a2a"></div>
<div class="a" style="left:0;top:428px;width:800px;height:7.3px;background:#f1f1f1"></div>
<div class="t" style="left:1px;top:429.9px;font-size:4.5px;color:#444;transform:scaleX(0.85);transform-origin:0 0">Ready</div>
<div class="t" style="left:647px;top:429.6px;font-size:4.3px;color:#333">User: Kristina Sorokina</div>
<div class="t" style="left:701.5px;top:429.6px;font-size:4.3px;color:#333">Group: ALL_RIGHT</div>
<div class="t" style="left:747px;top:429.6px;font-size:4.3px;color:#333">Site: Main</div>
<div class="t" style="left:770.5px;top:429.6px;font-size:4.1px;color:#999">CAP <span style="color:#444">NUM</span> SCRL</div>
<div class="a" style="left:0;top:435.3px;width:800px;height:14.7px;background:#101014"></div>
<div class="a" style="left:90px;top:435.3px;width:17.2px;height:14.7px;background:#3c3c44"></div>
<div class="a" style="left:55px;top:449px;width:15px;height:1px;background:#8ab4e0"></div>
<div class="a" style="left:73px;top:449px;width:15px;height:1px;background:#8ab4e0"></div>
<div class="a" style="left:90px;top:449px;width:17px;height:1px;background:#8ab4e0"></div>
<svg class="a" style="left:0;top:435" width="120" height="15" viewBox="0 435 120 15"><path d="M6,440.5 L8.3,440.2 L8.3,442.5 L6,442.5Z M8.8,440.1 L11.2,439.8 L11.2,442.5 L8.8,442.5Z M6,443 L8.3,443 L8.3,445.3 L6,445Z M8.8,443 L11.2,443 L11.2,445.7 L8.8,445.4Z" fill="#fff"/><circle cx="27" cy="441.6" r="2.3" stroke="#ddd" stroke-width="0.6" fill="none"/><path d="M25.4,443.3 L23.5,445.4" stroke="#ddd" stroke-width="0.7"/><rect x="40.5" y="440" width="6" height="5" rx="0.8" stroke="#ccc" stroke-width="0.6" fill="none"/><path d="M39.2,440.8 L39.2,444.2 M47.8,440.8 L47.8,444.2" stroke="#ccc" stroke-width="0.5"/><rect x="58.3" y="438.5" width="8" height="8" fill="#1c4f8f"/><circle cx="62.3" cy="442.5" r="2.2" fill="#8fc8f0"/><circle cx="62.3" cy="442.5" r="1" fill="#fff"/><circle cx="80.5" cy="442.5" r="4.3" fill="#1e8e3e"/><path d="M80.5,442.5 L76.8,440.3 A4.3,4.3 0 0 1 84.2,440.3Z" fill="#d93025"/><path d="M80.5,442.5 L84.2,440.3 A4.3,4.3 0 0 1 80.5,446.8Z" fill="#f9ab00"/><circle cx="80.5" cy="442.5" r="1.9" fill="#fff"/><circle cx="80.5" cy="442.5" r="1.4" fill="#4285f4"/><rect x="94.3" y="438.5" width="8" height="8" fill="#1a3f8a"/><circle cx="98.3" cy="442.5" r="3" fill="#e8e8f0"/><circle cx="98.8" cy="442.3" r="2.2" fill="#1a2a6a"/><path d="M99.5,444 L101.5,445.5" stroke="#f0a020" stroke-width="0.8"/></svg>
<svg class="a" style="left:700px;top:435px" width="100" height="15" viewBox="700 435 100 15"><path d="M720.3,443.2 L721.8,441.6 L723.3,443.2" stroke="#ddd" stroke-width="0.6" fill="none"/><rect x="728.3" y="440" width="4.5" height="3.3" stroke="#ddd" stroke-width="0.55" fill="none"/><path d="M730.5,443.3 L730.5,444.5 M729,444.6 L732,444.6" stroke="#ddd" stroke-width="0.5"/><path d="M737,441.3 L738,441.3 L739.5,440 L739.5,445 L738,443.7 L737,443.7Z" fill="#ddd"/><path d="M740.5,441 Q741.5,442.5 740.5,444" stroke="#ddd" stroke-width="0.45" fill="none"/><path d="M785,439.5 L791,439.5 L791,444 L787.5,444 L786,445.5 L786,444 L785,444Z" fill="#eee"/></svg>
<div class="t" style="left:745px;top:440.3px;font-size:4.3px;color:#eee">ENG</div>
<div class="t" style="left:763px;top:437.1px;font-size:4.1px;color:#eee">09:14</div>
<div class="t" style="left:759.5px;top:443.6px;font-size:4.1px;color:#eee">04-03-26</div>
</body></html>
